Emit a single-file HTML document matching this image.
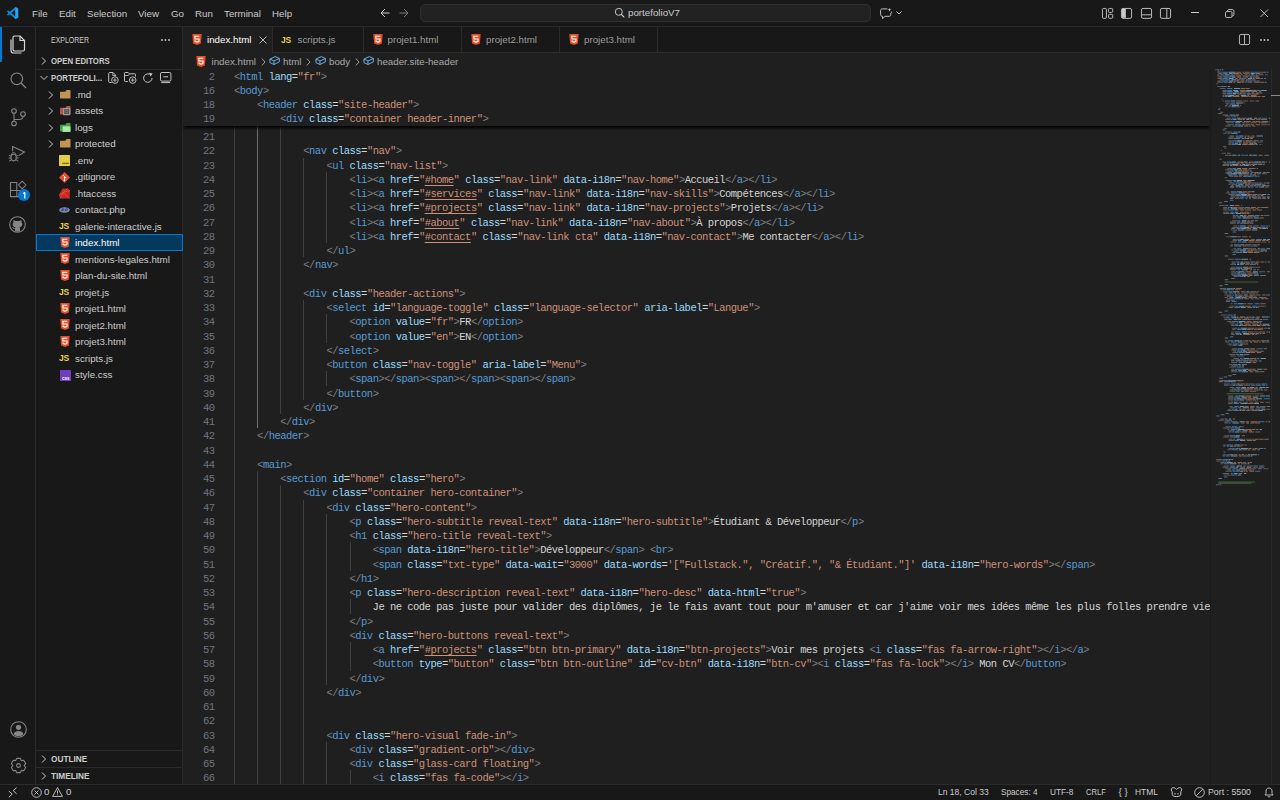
<!DOCTYPE html>
<html><head><meta charset="utf-8">
<style>
*{margin:0;padding:0;box-sizing:border-box}
html,body{width:1280px;height:800px;overflow:hidden;background:#181818}
body{position:relative;font-family:"Liberation Sans",sans-serif;color:#cccccc}
.abs{position:absolute}
svg{position:absolute;overflow:visible;z-index:6}
/* title bar */
#title{position:absolute;z-index:5;left:0;top:0;width:1280px;height:26.5px;background:#181818;border-bottom:1px solid #2b2b2b}
.menu{position:absolute;z-index:6;top:7px;font-size:9.75px;color:#cccccc;line-height:13px;white-space:nowrap}
#cc{position:absolute;z-index:6;left:419.5px;top:4px;width:451px;height:17.5px;background:#222222;border:1px solid #2f2f2f;border-radius:5px}
#cctext{position:absolute;z-index:7;left:628px;top:6px;font-size:9.75px;color:#cccccc;line-height:13px}
/* activity bar */
#act{position:absolute;left:0;top:26px;width:36px;height:758px;background:#181818;border-right:1px solid #2b2b2b}
#actind{position:absolute;left:0;top:26px;width:1.5px;height:36px;background:#0078d4}
/* sidebar */
#side{position:absolute;left:36px;top:26px;width:147px;height:758px;background:#181818;border-right:1px solid #2b2b2b}
.st{position:absolute;font-size:8.25px;line-height:11px;white-space:nowrap}
.row{position:absolute;left:36px;width:146px;height:16.5px}
.rt{position:absolute;left:75px;font-size:9.75px;line-height:13px;color:#cccccc;white-space:nowrap}
/* editor */
#tabs{position:absolute;left:183px;top:26px;width:1097px;height:26.5px;background:#181818;border-bottom:1px solid #2b2b2b}
.tab{position:absolute;top:26px;height:26.5px;background:#181818;border-right:1px solid #2b2b2b}
.tt{position:absolute;top:33px;font-size:9.75px;line-height:13px;color:#9d9d9d;white-space:nowrap}
#editor{position:absolute;left:183px;top:52px;width:1097px;height:732px;background:#1f1f1f}
.bc{position:absolute;top:55px;font-size:9.75px;line-height:13px;color:#a9a9a9;white-space:nowrap}
.ln{position:absolute;left:234px;height:14.25px;line-height:14.25px;font-family:"Liberation Mono",monospace;font-size:10.5px;letter-spacing:-0.525px;color:#d4d4d4;white-space:pre}
.num{position:absolute;left:189.5px;width:25px;text-align:right;height:14.25px;line-height:14.25px;font-family:"Liberation Mono",monospace;font-size:10.5px;letter-spacing:-0.525px;color:#6e7681;white-space:pre}
.ln i{font-style:normal}
.p{color:#808080}.t{color:#569cd6}.a{color:#9cdcfe}.s{color:#ce9178}
u{text-decoration:underline;text-decoration-color:#ce9178;text-underline-offset:1.5px}
.g{position:absolute;width:1px;background:#404040}
.g.act{background:#707070}
#sticky{position:absolute;left:183px;top:69px;width:1027px;height:57px;background:#1f1f1f;box-shadow:0 3px 3px -1px #000}
/* status */
#status{position:absolute;left:0;top:783.5px;width:1280px;height:16px;background:#181818;border-top:1px solid #2b2b2b}
.sb{position:absolute;top:785px;font-size:9.75px;line-height:13px;color:#cccccc;white-space:nowrap}
</style></head><body>

<div id="title"></div>
<!-- vscode logo -->
<svg style="left:7px;top:7px" width="12" height="12" viewBox="0 0 100 100"><path d="M72 8L9 63" stroke="#0a8fdc" stroke-width="15" stroke-linecap="round"/><path d="M72 92L9 37" stroke="#0a8fdc" stroke-width="15" stroke-linecap="round"/><path d="M68 1L94 12V88L68 99Z" fill="#22a7f0"/></svg>
<div class="menu" style="left:32px">File</div>
<div class="menu" style="left:59px">Edit</div>
<div class="menu" style="left:87px">Selection</div>
<div class="menu" style="left:138px">View</div>
<div class="menu" style="left:171px">Go</div>
<div class="menu" style="left:195px">Run</div>
<div class="menu" style="left:224px">Terminal</div>
<div class="menu" style="left:272px">Help</div>
<!-- nav arrows -->
<svg style="left:380px;top:8px" width="10" height="10" viewBox="0 0 10 10"><path d="M9.5 5H1M5 1L1 5L5 9" stroke="#cccccc" stroke-width="1" fill="none"/></svg>
<svg style="left:399px;top:8px" width="10" height="10" viewBox="0 0 10 10"><path d="M0.5 5H9M5 1L9 5L5 9" stroke="#7a7a7a" stroke-width="1" fill="none"/></svg>
<div id="cc"></div>
<svg style="left:614px;top:7px" width="11" height="11" viewBox="0 0 11 11"><circle cx="4.8" cy="4.85" r="3.5" stroke="#cccccc" stroke-width="0.95" fill="none"/><path d="M7.3 7.4L9.9 10" stroke="#cccccc" stroke-width="1.1" stroke-linecap="round"/></svg>
<div id="cctext">portefolioV7</div>
<svg style="left:1101.9px;top:7.7px" width="11.2" height="10.8" viewBox="0 0 11.2 10.8"><rect x="0.45" y="0.45" width="4" height="9.9" rx="1" stroke="#cccccc" stroke-width="0.9" fill="none"/><rect x="6.5" y="0.45" width="4.2" height="4" rx="1" stroke="#cccccc" stroke-width="0.9" fill="none"/><rect x="6.5" y="6.3" width="4.2" height="4" rx="1" stroke="#cccccc" stroke-width="0.9" fill="none"/></svg>
<svg style="left:1121.2px;top:7.7px" width="11" height="10.8" viewBox="0 0 11 10.8"><rect x="0.45" y="0.45" width="10.1" height="9.9" rx="1.5" stroke="#cccccc" stroke-width="0.9" fill="none"/><path d="M1 1H4.3V9.8H1Z" fill="#cccccc"/><path d="M4.3 0.8V10" stroke="#cccccc" stroke-width="0.9"/></svg>
<svg style="left:1141px;top:7.7px" width="11" height="10.8" viewBox="0 0 11 10.8"><rect x="0.45" y="0.45" width="10.1" height="9.9" rx="1.5" stroke="#cccccc" stroke-width="0.9" fill="none"/><path d="M0.8 6.8H10.2" stroke="#cccccc" stroke-width="0.9"/></svg>
<svg style="left:1160.2px;top:7.7px" width="11" height="10.8" viewBox="0 0 11 10.8"><rect x="0.45" y="0.45" width="10.1" height="9.9" rx="1.5" stroke="#cccccc" stroke-width="0.9" fill="none"/><path d="M6.8 0.8V10" stroke="#cccccc" stroke-width="0.9"/></svg>
<svg style="left:1190.5px;top:12px" width="9" height="1" viewBox="0 0 9 1"><rect x="0" y="0" width="8" height="1" fill="#cccccc"/></svg>
<svg style="left:1224.5px;top:8.5px" width="9.5" height="9" viewBox="0 0 9.5 9"><path d="M2.5 2.2V1.8C2.5 1 3 0.5 3.8 0.5H7.2C8.2 0.5 8.9 1.2 8.9 2.2V5.6C8.9 6.4 8.4 6.9 7.6 6.9H7.1" stroke="#cccccc" fill="none" stroke-width="0.9"/><rect x="0.5" y="2.5" width="6.5" height="6" rx="1.3" stroke="#cccccc" fill="none" stroke-width="0.9"/></svg>
<svg style="left:1259.5px;top:8.5px" width="8.5" height="8.5" viewBox="0 0 8.5 8.5"><path d="M0.5 0.5L8 8M8 0.5L0.5 8" stroke="#cccccc" stroke-width="0.9"/></svg>
<svg style="left:880px;top:7.5px" width="13" height="12" viewBox="0 0 13 12"><path d="M7.4 0.9H2.2C1.3 0.9 0.6 1.6 0.6 2.5V6.7C0.6 7.6 1.3 8.3 2.2 8.3H2.6V10.7L4.9 8.3H9.2C10.1 8.3 10.8 7.6 10.8 6.7V5" stroke="#cccccc" fill="none" stroke-width="0.95"/><path d="M9.5 -0.2L10 1.2L11.4 1.7L10 2.2L9.5 3.6L9 2.2L7.6 1.7L9 1.2Z" fill="#cccccc"/><path d="M11.6 3.1L11.9 3.9L12.6 4.2L11.9 4.5L11.6 5.3L11.3 4.5L10.6 4.2L11.3 3.9Z" fill="#cccccc"/></svg>
<svg style="left:895.8px;top:11.3px" width="6" height="3.5" viewBox="0 0 6 3.5"><path d="M0.4 0.4L3 3L5.6 0.4" stroke="#cccccc" fill="none" stroke-width="0.95"/></svg>

<div id="act"></div>
<div id="actind"></div>
<svg style="left:10px;top:35px" width="16" height="19" viewBox="0 0 16 19"><path d="M4.5 1H10L14.5 5.5V14.5C14.5 15.3 13.8 16 13 16H4.5C3.7 16 3 15.3 3 14.5V2.5C3 1.7 3.7 1 4.5 1Z" stroke="#d7d7d7" stroke-width="1.2" fill="none"/><path d="M10 1V5.5H14.5" stroke="#d7d7d7" stroke-width="1.2" fill="none"/><path d="M1 4.5V15.5C1 17 2 18 3.5 18H11.5" stroke="#d7d7d7" stroke-width="1.2" fill="none"/></svg>
<svg style="left:10px;top:72px" width="17" height="17" viewBox="0 0 17 17"><circle cx="6.8" cy="6.8" r="5.8" stroke="#868686" stroke-width="1.2" fill="none"/><path d="M10.8 10.8L16 16" stroke="#868686" stroke-width="1.3"/></svg>
<svg style="left:10.5px;top:107.5px" width="15" height="19" viewBox="0 0 15 19"><circle cx="3" cy="3" r="2.3" stroke="#868686" stroke-width="1.1" fill="none"/><circle cx="3" cy="15.5" r="2.3" stroke="#868686" stroke-width="1.1" fill="none"/><circle cx="12" cy="6" r="2.3" stroke="#868686" stroke-width="1.1" fill="none"/><path d="M3 5.3V13.2M12 8.3C12 10.5 10.5 11.5 8 11.5H3" stroke="#868686" stroke-width="1.1" fill="none"/></svg>
<svg style="left:8px;top:145px" width="18" height="18" viewBox="0 0 18 18"><path d="M4.6 6.3V1.4L16.4 7L10.8 10.6" stroke="#868686" stroke-width="1.1" fill="none" stroke-linejoin="round"/><ellipse cx="5.65" cy="12.6" rx="2.6" ry="3.3" stroke="#868686" stroke-width="1.1" fill="none"/><path d="M3.3 9.6C3.5 8.4 4.4 7.7 5.65 7.7C6.9 7.7 7.8 8.4 8 9.6M0.9 10.3L3 11.1M0.7 13H3M1 16.2L3.2 14.9M10.4 10.3L8.3 11.1M10.6 13H8.3M10.3 16.2L8.1 14.9" stroke="#868686" stroke-width="1" fill="none"/></svg>
<svg style="left:9px;top:180px" width="18" height="18" viewBox="0 0 18 18"><path d="M1.5 2.5H7.8V10.5H1.5Z M1.5 10.5H7.8V16.6H1.5Z M7.8 10.5H14V16.6H7.8Z" stroke="#868686" stroke-width="1.05" fill="none" stroke-linejoin="round"/><path d="M13.2 1.2L17 5L13.2 8.8L9.4 5Z" stroke="#868686" stroke-width="1.05" fill="none" stroke-linejoin="round"/></svg>
<div class="abs" style="left:18.25px;top:188.8px;width:12px;height:12px;border-radius:6px;background:#0078d4;z-index:7"></div>
<svg style="left:22px;top:191.5px;z-index:8" width="5" height="7" viewBox="0 0 5 7"><path d="M1 1.6L2.8 0.6V6.4" stroke="#ffffff" stroke-width="1.2" fill="none" stroke-linejoin="round"/></svg>
<svg style="left:9px;top:216px" width="17" height="17" viewBox="0 0 17 17"><circle cx="8.5" cy="8.5" r="7.8" stroke="#868686" stroke-width="1.1" fill="none"/><path d="M6 15.5V13C5 13.2 4.2 12.8 3.8 12C3.5 11.4 3.2 11.2 3 11.1C4 11 4.4 11.7 4.8 12.1C5.2 12.4 5.8 12.4 6.1 12.2C6.2 11.8 6.4 11.5 6.6 11.3C4.6 11.1 3.7 10.1 3.7 8.3C3.7 7.5 4 6.8 4.5 6.3C4.3 5.7 4.3 4.9 4.6 4.3C5.3 4.3 6 4.7 6.5 5.1C7.8 4.8 9.2 4.8 10.5 5.1C11 4.7 11.7 4.3 12.4 4.3C12.7 4.9 12.7 5.7 12.5 6.3C13 6.8 13.3 7.5 13.3 8.3C13.3 10.1 12.4 11.1 10.4 11.3C10.8 11.7 11 12.2 11 12.8V15.5Z" fill="#868686"/></svg>
<svg style="left:9.5px;top:720.5px" width="17" height="17" viewBox="0 0 17 17"><circle cx="8.5" cy="8.5" r="7.8" stroke="#868686" stroke-width="1.1" fill="none"/><circle cx="8.5" cy="6.3" r="2.6" fill="#868686"/><path d="M3.6 13.2C4.2 11 6 10 8.5 10C11 10 12.8 11 13.4 13.2C12.3 14.5 10.5 15.2 8.5 15.2C6.5 15.2 4.7 14.5 3.6 13.2Z" fill="#868686"/></svg>
<svg style="left:9.5px;top:757.1px" width="17" height="17" viewBox="0 0 17 17"><path d="M5.72 3.64 L6.60 1.35 L10.40 1.35 L11.28 3.64 L11.32 3.66 L13.74 3.28 L15.64 6.57 L14.10 8.48 L14.10 8.52 L15.64 10.43 L13.74 13.72 L11.32 13.34 L11.28 13.36 L10.40 15.65 L6.60 15.65 L5.72 13.36 L5.68 13.34 L3.26 13.72 L1.36 10.43 L2.90 8.52 L2.90 8.48 L1.36 6.57 L3.26 3.28 L5.68 3.66Z" stroke="#868686" stroke-width="1.1" fill="none" stroke-linejoin="round"/><circle cx="8.5" cy="8.5" r="1.9" stroke="#868686" stroke-width="1.1" fill="none"/></svg>

<div id="side"></div>
<div class="st" style="left:51px;top:35px;color:#cccccc;transform:scaleX(0.845);transform-origin:0 0">EXPLORER</div>
<svg style="left:161px;top:39px" width="9" height="2" viewBox="0 0 9 2"><circle cx="1" cy="1" r="0.9" fill="#cccccc"/><circle cx="4.5" cy="1" r="0.9" fill="#cccccc"/><circle cx="8" cy="1" r="0.9" fill="#cccccc"/></svg>
<svg style="left:41px;top:57px" width="6" height="8" viewBox="0 0 6 8"><path d="M1 0.5L4.5 4L1 7.5" stroke="#cccccc" stroke-width="1" fill="none"/></svg>
<div class="st" style="left:51px;top:56px;font-weight:bold;color:#cccccc;transform:scaleX(0.944);transform-origin:0 0">OPEN EDITORS</div>
<div class="abs" style="left:36px;top:69px;width:146px;height:1px;background:#2b2b2b"></div>
<svg style="left:40px;top:75px" width="8" height="6" viewBox="0 0 8 6"><path d="M0.5 1L4 4.5L7.5 1" stroke="#cccccc" stroke-width="1" fill="none"/></svg>
<div class="st" style="left:51px;top:73px;font-weight:bold;color:#cccccc;transform:scaleX(0.944);transform-origin:0 0">PORTEFOLI...</div>
<svg style="left:107.5px;top:72px" width="12" height="12" viewBox="0 0 12 12"><path d="M3.6 10.5H1.7C1.1 10.5 0.7 10.1 0.7 9.5V1.5C0.7 0.9 1.1 0.5 1.7 0.5H5L7.6 3.1V4.3" stroke="#cccccc" stroke-width="0.95" fill="none"/><path d="M4.8 0.6V3.5H7.6" stroke="#cccccc" stroke-width="0.8" fill="none"/><circle cx="6.9" cy="8.1" r="3.3" stroke="#cccccc" stroke-width="0.9" fill="#181818"/><path d="M6.9 6.2V10M5 8.1H8.8" stroke="#cccccc" stroke-width="0.8"/></svg>
<svg style="left:124px;top:72px" width="13" height="12" viewBox="0 0 13 12"><path d="M3.8 9.5H1.2C0.8 9.5 0.5 9.2 0.5 8.8V1.2C0.5 0.8 0.8 0.5 1.2 0.5H4.2L5.4 1.8H10.8C11.2 1.8 11.5 2.1 11.5 2.5V4.5" stroke="#cccccc" stroke-width="0.95" fill="none"/><path d="M0.5 3.5H4.4L5.4 1.8" stroke="#cccccc" stroke-width="0.8" fill="none"/><circle cx="8.7" cy="8.1" r="3.3" stroke="#cccccc" stroke-width="0.9" fill="#181818"/><path d="M8.7 6.2V10M6.8 8.1H10.6" stroke="#cccccc" stroke-width="0.8"/></svg>
<svg style="left:142.8px;top:72.6px" width="10.5" height="10" viewBox="0 0 10.5 10"><path d="M9 5A4.2 4.2 0 1 1 6.4 1.2" stroke="#cccccc" stroke-width="0.95" fill="none"/><path d="M5.9 -0.2L9.6 0.5L7.6 3.6Z" fill="#cccccc"/></svg>
<svg style="left:160.2px;top:72px" width="11.5" height="11.5" viewBox="0 0 11.5 11.5"><rect x="0.5" y="0.5" width="10.4" height="8.6" rx="1.3" stroke="#cccccc" stroke-width="0.95" fill="none"/><path d="M3.3 4.8H8.1" stroke="#cccccc" stroke-width="1"/><path d="M1.2 10.6H10.2" stroke="#cccccc" stroke-width="0.95"/></svg>
<svg style="left:48px;top:90.5px" width="6" height="8" viewBox="0 0 6 8"><path d="M1 0.5L4.5 4L1 7.5" stroke="#cccccc" stroke-width="1" fill="none"/></svg>
<svg style="left:59.7px;top:89.8px" width="11" height="9" viewBox="0 0 11 9"><path d="M0 2.3C0 2 0.2 1.8 0.5 1.8H5.2L6.4 0.4C6.5 0.2 6.7 0.1 6.9 0.1H10C10.3 0.1 10.5 0.3 10.5 0.6V8C10.5 8.3 10.3 8.5 10 8.5H0.5C0.2 8.5 0 8.3 0 8Z" fill="#c09553"/></svg>
<div class="rt" style="top:87.50px">.md</div>
<svg style="left:48px;top:107.0px" width="6" height="8" viewBox="0 0 6 8"><path d="M1 0.5L4.5 4L1 7.5" stroke="#cccccc" stroke-width="1" fill="none"/></svg>
<svg style="left:59.7px;top:106.3px" width="11" height="9.5" viewBox="0 0 11 9.5"><path d="M0 2.3C0 2 0.2 1.8 0.5 1.8H5.2L6.4 0.4C6.5 0.2 6.7 0.1 6.9 0.1H10C10.3 0.1 10.5 0.3 10.5 0.6V8C10.5 8.3 10.3 8.5 10 8.5H0.5C0.2 8.5 0 8.3 0 8Z" fill="#c0504d"/><rect x="3" y="2" width="7.3" height="7.2" rx="0.8" fill="#9a9a9a"/><rect x="4.2" y="3.2" width="4.9" height="4.8" fill="#4a4a4a"/><circle cx="6.65" cy="5.6" r="1.5" stroke="#9a9a9a" stroke-width="0.6" fill="none"/></svg>
<div class="rt" style="top:104.00px">assets</div>
<svg style="left:48px;top:123.5px" width="6" height="8" viewBox="0 0 6 8"><path d="M1 0.5L4.5 4L1 7.5" stroke="#cccccc" stroke-width="1" fill="none"/></svg>
<svg style="left:59.7px;top:122.8px" width="11" height="9.5" viewBox="0 0 11 9.5"><path d="M0 2.3C0 2 0.2 1.8 0.5 1.8H5.2L6.4 0.4C6.5 0.2 6.7 0.1 6.9 0.1H10C10.3 0.1 10.5 0.3 10.5 0.6V8C10.5 8.3 10.3 8.5 10 8.5H0.5C0.2 8.5 0 8.3 0 8Z" fill="#43a047"/><rect x="2.5" y="3.3" width="8" height="5.8" rx="0.6" fill="#9be29b"/><path d="M3.5 5H9.5M3.5 6.8H9.5" stroke="#d6f5d6" stroke-width="0.6"/></svg>
<div class="rt" style="top:120.50px">logs</div>
<svg style="left:48px;top:140.0px" width="6" height="8" viewBox="0 0 6 8"><path d="M1 0.5L4.5 4L1 7.5" stroke="#cccccc" stroke-width="1" fill="none"/></svg>
<svg style="left:59.7px;top:139.3px" width="11" height="9" viewBox="0 0 11 9"><path d="M0 2.3C0 2 0.2 1.8 0.5 1.8H5.2L6.4 0.4C6.5 0.2 6.7 0.1 6.9 0.1H10C10.3 0.1 10.5 0.3 10.5 0.6V8C10.5 8.3 10.3 8.5 10 8.5H0.5C0.2 8.5 0 8.3 0 8Z" fill="#c09553"/></svg>
<div class="rt" style="top:137.00px">protected</div>
<svg style="left:59px;top:154.7px" width="11" height="11" viewBox="0 0 11 11"><rect x="0" y="0" width="11" height="11" rx="0.5" fill="#e0cc48"/><path d="M3.2 8.3H9.8" stroke="#5a5020" stroke-width="1"/></svg>
<div class="rt" style="top:153.50px">.env</div>
<svg style="left:59px;top:171.8px" width="11" height="11" viewBox="0 0 11 11"><path d="M5.5 0L11 5.5L5.5 11L0 5.5Z" fill="#e44e33"/><path d="M4.2 3.2L6.8 5.8M5.5 4.5V8.6" stroke="#fff" stroke-width="0.9"/><circle cx="5.5" cy="8.4" r="0.8" fill="#fff"/></svg>
<div class="rt" style="top:170.00px">.gitignore</div>
<svg style="left:59px;top:188.0px" width="11" height="11" viewBox="0 0 11 11"><path d="M3.5 0.4H8.8L11 2.6L10.6 10.6L1.2 10.6L0 7Z" fill="#c42a20"/><path d="M1.2 10.6L4 4.5L10.6 10.6M4 4.5L8.8 0.4M0 7L4 4.5L11 2.6" stroke="#e86a60" stroke-width="0.5" fill="none"/></svg>
<div class="rt" style="top:186.50px">.htaccess</div>
<svg style="left:59px;top:207.0px" width="11" height="6" viewBox="0 0 11 6"><ellipse cx="5.5" cy="3" rx="5.3" ry="2.8" fill="#7d8ac0"/><path d="M2.6 4.3L3.2 1.8H4.4C5 1.8 5.1 2.3 4.9 2.8C4.7 3.3 4.3 3.4 3.8 3.4H3M6.2 4.3L6.8 1.8H8C8.6 1.8 8.7 2.3 8.5 2.8C8.3 3.3 7.9 3.4 7.4 3.4H6.6" stroke="#2a2f4a" stroke-width="0.7" fill="none"/></svg>
<div class="rt" style="top:203.00px">contact.php</div>
<div class="abs" style="left:59px;top:220.0px;font-size:8.5px;font-weight:bold;color:#e8d44d;line-height:12px;letter-spacing:-0.3px">JS</div>
<div class="rt" style="top:219.50px">galerie-interactive.js</div>
<div class="abs" style="left:36px;top:234.25px;width:147px;height:16.5px;background:#04395e;border:1px solid #0078d4"></div>
<svg style="left:60px;top:236.8px" width="10" height="11" viewBox="0 0 10 11"><path d="M0.3 0H9.7L8.9 9.5L5 11L1.1 9.5Z" fill="#e44d26"/><path d="M7.3 2.3H2.8L3 5H7.1L6.9 7.5L5 8.1L3.1 7.5L3 6.3" stroke="#fff" stroke-width="1.1" fill="none"/></svg>
<div class="rt" style="top:236.00px;color:#ffffff">index.html</div>
<svg style="left:60px;top:253.3px" width="10" height="11" viewBox="0 0 10 11"><path d="M0.3 0H9.7L8.9 9.5L5 11L1.1 9.5Z" fill="#e44d26"/><path d="M7.3 2.3H2.8L3 5H7.1L6.9 7.5L5 8.1L3.1 7.5L3 6.3" stroke="#fff" stroke-width="1.1" fill="none"/></svg>
<div class="rt" style="top:252.50px">mentions-legales.html</div>
<svg style="left:60px;top:269.8px" width="10" height="11" viewBox="0 0 10 11"><path d="M0.3 0H9.7L8.9 9.5L5 11L1.1 9.5Z" fill="#e44d26"/><path d="M7.3 2.3H2.8L3 5H7.1L6.9 7.5L5 8.1L3.1 7.5L3 6.3" stroke="#fff" stroke-width="1.1" fill="none"/></svg>
<div class="rt" style="top:269.00px">plan-du-site.html</div>
<div class="abs" style="left:59px;top:286.0px;font-size:8.5px;font-weight:bold;color:#e8d44d;line-height:12px;letter-spacing:-0.3px">JS</div>
<div class="rt" style="top:285.50px">projet.js</div>
<svg style="left:60px;top:302.8px" width="10" height="11" viewBox="0 0 10 11"><path d="M0.3 0H9.7L8.9 9.5L5 11L1.1 9.5Z" fill="#e44d26"/><path d="M7.3 2.3H2.8L3 5H7.1L6.9 7.5L5 8.1L3.1 7.5L3 6.3" stroke="#fff" stroke-width="1.1" fill="none"/></svg>
<div class="rt" style="top:302.00px">projet1.html</div>
<svg style="left:60px;top:319.3px" width="10" height="11" viewBox="0 0 10 11"><path d="M0.3 0H9.7L8.9 9.5L5 11L1.1 9.5Z" fill="#e44d26"/><path d="M7.3 2.3H2.8L3 5H7.1L6.9 7.5L5 8.1L3.1 7.5L3 6.3" stroke="#fff" stroke-width="1.1" fill="none"/></svg>
<div class="rt" style="top:318.50px">projet2.html</div>
<svg style="left:60px;top:335.8px" width="10" height="11" viewBox="0 0 10 11"><path d="M0.3 0H9.7L8.9 9.5L5 11L1.1 9.5Z" fill="#e44d26"/><path d="M7.3 2.3H2.8L3 5H7.1L6.9 7.5L5 8.1L3.1 7.5L3 6.3" stroke="#fff" stroke-width="1.1" fill="none"/></svg>
<div class="rt" style="top:335.00px">projet3.html</div>
<div class="abs" style="left:59px;top:352.0px;font-size:8.5px;font-weight:bold;color:#e8d44d;line-height:12px;letter-spacing:-0.3px">JS</div>
<div class="rt" style="top:351.50px">scripts.js</div>
<svg style="left:59.5px;top:369.5px" width="11" height="11" viewBox="0 0 11 11"><rect x="0" y="0" width="11" height="11" rx="0.6" fill="#6d3fc0"/><text x="5.8" y="9.5" font-size="4.6" font-family="Liberation Sans" font-weight="bold" fill="#fff" text-anchor="middle">css</text></svg>
<div class="rt" style="top:368.00px">style.css</div>
<div class="abs" style="left:36px;top:750px;width:146px;height:1px;background:#2b2b2b"></div>
<svg style="left:41px;top:755px" width="6" height="8" viewBox="0 0 6 8"><path d="M1 0.5L4.5 4L1 7.5" stroke="#cccccc" stroke-width="1" fill="none"/></svg>
<div class="st" style="left:51px;top:754px;font-weight:bold;color:#cccccc">OUTLINE</div>
<div class="abs" style="left:36px;top:767px;width:146px;height:1px;background:#2b2b2b"></div>
<svg style="left:41px;top:772px" width="6" height="8" viewBox="0 0 6 8"><path d="M1 0.5L4.5 4L1 7.5" stroke="#cccccc" stroke-width="1" fill="none"/></svg>
<div class="st" style="left:51px;top:771px;font-weight:bold;color:#cccccc">TIMELINE</div>

<div id="editor"></div>
<div id="tabs"></div>
<div class="abs" style="left:183px;top:26px;width:90px;height:27px;background:#1f1f1f;border-top:1px solid #0078d4;border-right:1px solid #2b2b2b"></div>
<svg style="left:192px;top:33.8px" width="10" height="11" viewBox="0 0 10 11"><path d="M0.3 0H9.7L8.9 9.5L5 11L1.1 9.5Z" fill="#e44d26"/><path d="M7.3 2.3H2.8L3 5H7.1L6.9 7.5L5 8.1L3.1 7.5L3 6.3" stroke="#fff" stroke-width="1.1" fill="none"/></svg>
<div class="tt" style="left:207px;color:#ffffff">index.html</div>
<svg style="left:259px;top:36px" width="8" height="8" viewBox="0 0 8 8"><path d="M0.5 0.5L7.5 7.5M7.5 0.5L0.5 7.5" stroke="#cccccc" stroke-width="0.9"/></svg>
<div class="abs" style="left:273px;top:26px;width:90.5px;height:26.5px;border-right:1px solid #2b2b2b;border-bottom:1px solid #2b2b2b;background:#181818"></div>
<div class="abs" style="left:281px;top:33.5px;font-size:8.5px;font-weight:bold;color:#e8d44d;line-height:12px;letter-spacing:-0.3px">JS</div>
<div class="tt" style="left:297.5px">scripts.js</div>
<div class="abs" style="left:363px;top:26px;width:98.5px;height:26.5px;border-right:1px solid #2b2b2b;border-bottom:1px solid #2b2b2b;background:#181818"></div>
<svg style="left:372.5px;top:33.8px" width="10" height="11" viewBox="0 0 10 11"><path d="M0.3 0H9.7L8.9 9.5L5 11L1.1 9.5Z" fill="#e44d26"/><path d="M7.3 2.3H2.8L3 5H7.1L6.9 7.5L5 8.1L3.1 7.5L3 6.3" stroke="#fff" stroke-width="1.1" fill="none"/></svg>
<div class="tt" style="left:387.5px">projet1.html</div>
<div class="abs" style="left:461px;top:26px;width:98.5px;height:26.5px;border-right:1px solid #2b2b2b;border-bottom:1px solid #2b2b2b;background:#181818"></div>
<svg style="left:470.5px;top:33.8px" width="10" height="11" viewBox="0 0 10 11"><path d="M0.3 0H9.7L8.9 9.5L5 11L1.1 9.5Z" fill="#e44d26"/><path d="M7.3 2.3H2.8L3 5H7.1L6.9 7.5L5 8.1L3.1 7.5L3 6.3" stroke="#fff" stroke-width="1.1" fill="none"/></svg>
<div class="tt" style="left:486px">projet2.html</div>
<div class="abs" style="left:559px;top:26px;width:98.5px;height:26.5px;border-right:1px solid #2b2b2b;border-bottom:1px solid #2b2b2b;background:#181818"></div>
<svg style="left:568.5px;top:33.8px" width="10" height="11" viewBox="0 0 10 11"><path d="M0.3 0H9.7L8.9 9.5L5 11L1.1 9.5Z" fill="#e44d26"/><path d="M7.3 2.3H2.8L3 5H7.1L6.9 7.5L5 8.1L3.1 7.5L3 6.3" stroke="#fff" stroke-width="1.1" fill="none"/></svg>
<div class="tt" style="left:584px">projet3.html</div>
<div class="abs" style="left:362.5px;top:26.5px;width:1px;height:26px;background:#2b2b2b"></div>
<div class="abs" style="left:460.5px;top:26.5px;width:1px;height:26px;background:#2b2b2b"></div>
<div class="abs" style="left:558.5px;top:26.5px;width:1px;height:26px;background:#2b2b2b"></div>
<div class="abs" style="left:656.5px;top:26.5px;width:1px;height:26px;background:#2b2b2b"></div>
<svg style="left:1238.6px;top:33.9px" width="11" height="11" viewBox="0 0 11 11"><rect x="0.45" y="0.45" width="10.1" height="10.1" rx="1.5" stroke="#cccccc" stroke-width="0.9" fill="none"/><path d="M5.5 0.8V10.2" stroke="#cccccc" stroke-width="0.9"/></svg>
<svg style="left:1259.5px;top:38.6px" width="9" height="2" viewBox="0 0 9 2"><circle cx="1" cy="1" r="0.9" fill="#cccccc"/><circle cx="4.5" cy="1" r="0.9" fill="#cccccc"/><circle cx="8" cy="1" r="0.9" fill="#cccccc"/></svg>
<svg style="left:196px;top:55.8px" width="10" height="11" viewBox="0 0 10 11"><path d="M0.3 0H9.7L8.9 9.5L5 11L1.1 9.5Z" fill="#e44d26"/><path d="M7.3 2.3H2.8L3 5H7.1L6.9 7.5L5 8.1L3.1 7.5L3 6.3" stroke="#fff" stroke-width="1.1" fill="none"/></svg>
<div class="bc" style="left:211.5px">index.html</div>
<svg style="left:260.5px;top:57.5px" width="5" height="8" viewBox="0 0 5 8"><path d="M0.8 0.5L4 4L0.8 7.5" stroke="#a9a9a9" stroke-width="0.9" fill="none"/></svg>
<svg style="left:268.8px;top:56.1px" width="11.3" height="8.8" viewBox="0 1.5 16 12.5"><path d="M1.3 5.9L8.9 2.3L14.6 5V9.9L7 13.6L1.3 10.9Z M1.3 5.9L7 8.5L14.6 5 M7 8.5V13.6" stroke="#75beff" stroke-width="1.25" fill="none" stroke-linejoin="round"/></svg>
<div class="bc" style="left:283px">html</div>
<svg style="left:306px;top:57.5px" width="5" height="8" viewBox="0 0 5 8"><path d="M0.8 0.5L4 4L0.8 7.5" stroke="#a9a9a9" stroke-width="0.9" fill="none"/></svg>
<svg style="left:314.8px;top:56.1px" width="11.3" height="8.8" viewBox="0 1.5 16 12.5"><path d="M1.3 5.9L8.9 2.3L14.6 5V9.9L7 13.6L1.3 10.9Z M1.3 5.9L7 8.5L14.6 5 M7 8.5V13.6" stroke="#75beff" stroke-width="1.25" fill="none" stroke-linejoin="round"/></svg>
<div class="bc" style="left:329px">body</div>
<svg style="left:355px;top:57.5px" width="5" height="8" viewBox="0 0 5 8"><path d="M0.8 0.5L4 4L0.8 7.5" stroke="#a9a9a9" stroke-width="0.9" fill="none"/></svg>
<svg style="left:363.3px;top:56.1px" width="11.3" height="8.8" viewBox="0 1.5 16 12.5"><path d="M1.3 5.9L8.9 2.3L14.6 5V9.9L7 13.6L1.3 10.9Z M1.3 5.9L7 8.5L14.6 5 M7 8.5V13.6" stroke="#75beff" stroke-width="1.25" fill="none" stroke-linejoin="round"/></svg>
<div class="bc" style="left:377px">header.site-header</div>
<div class="g" style="left:234.0px;top:126.00px;height:658.50px"></div>
<div class="g act" style="left:257.1px;top:126.00px;height:302.25px"></div>
<div class="g" style="left:257.1px;top:471.00px;height:313.50px"></div>
<div class="g" style="left:280.2px;top:126.00px;height:288.00px"></div>
<div class="g" style="left:280.2px;top:485.25px;height:299.25px"></div>
<div class="g" style="left:303.3px;top:157.50px;height:99.75px"></div>
<div class="g" style="left:303.3px;top:300.00px;height:99.75px"></div>
<div class="g" style="left:303.3px;top:499.50px;height:285.00px"></div>
<div class="g" style="left:326.4px;top:171.75px;height:71.25px"></div>
<div class="g" style="left:326.4px;top:314.25px;height:28.50px"></div>
<div class="g" style="left:326.4px;top:371.25px;height:14.25px"></div>
<div class="g" style="left:326.4px;top:513.75px;height:171.00px"></div>
<div class="g" style="left:326.4px;top:741.75px;height:42.75px"></div>
<div class="g" style="left:349.5px;top:542.25px;height:28.50px"></div>
<div class="g" style="left:349.5px;top:599.25px;height:14.25px"></div>
<div class="g" style="left:349.5px;top:642.00px;height:28.50px"></div>
<div class="g" style="left:349.5px;top:770.25px;height:14.25px"></div>
<div class="num" style="top:130.00px">21</div>
<div class="num" style="top:144.25px">22</div>
<div class="num" style="top:158.50px">23</div>
<div class="num" style="top:172.75px">24</div>
<div class="num" style="top:187.00px">25</div>
<div class="num" style="top:201.25px">26</div>
<div class="num" style="top:215.50px">27</div>
<div class="num" style="top:229.75px">28</div>
<div class="num" style="top:244.00px">29</div>
<div class="num" style="top:258.25px">30</div>
<div class="num" style="top:272.50px">31</div>
<div class="num" style="top:286.75px">32</div>
<div class="num" style="top:301.00px">33</div>
<div class="num" style="top:315.25px">34</div>
<div class="num" style="top:329.50px">35</div>
<div class="num" style="top:343.75px">36</div>
<div class="num" style="top:358.00px">37</div>
<div class="num" style="top:372.25px">38</div>
<div class="num" style="top:386.50px">39</div>
<div class="num" style="top:400.75px">40</div>
<div class="num" style="top:415.00px">41</div>
<div class="num" style="top:429.25px">42</div>
<div class="num" style="top:443.50px">43</div>
<div class="num" style="top:457.75px">44</div>
<div class="num" style="top:472.00px">45</div>
<div class="num" style="top:486.25px">46</div>
<div class="num" style="top:500.50px">47</div>
<div class="num" style="top:514.75px">48</div>
<div class="num" style="top:529.00px">49</div>
<div class="num" style="top:543.25px">50</div>
<div class="num" style="top:557.50px">51</div>
<div class="num" style="top:571.75px">52</div>
<div class="num" style="top:586.00px">53</div>
<div class="num" style="top:600.25px">54</div>
<div class="num" style="top:614.50px">55</div>
<div class="num" style="top:628.75px">56</div>
<div class="num" style="top:643.00px">57</div>
<div class="num" style="top:657.25px">58</div>
<div class="num" style="top:671.50px">59</div>
<div class="num" style="top:685.75px">60</div>
<div class="num" style="top:700.00px">61</div>
<div class="num" style="top:714.25px">62</div>
<div class="num" style="top:728.50px">63</div>
<div class="num" style="top:742.75px">64</div>
<div class="num" style="top:757.00px">65</div>
<div class="num" style="top:771.25px">66</div>
<div class="ln" style="top:130.00px"></div>
<div class="ln" style="top:144.25px">            <i class="p">&lt;</i><i class="t">nav</i> <i class="a">class</i>=<i class="s">"nav"</i><i class="p">&gt;</i></div>
<div class="ln" style="top:158.50px">                <i class="p">&lt;</i><i class="t">ul</i> <i class="a">class</i>=<i class="s">"nav-list"</i><i class="p">&gt;</i></div>
<div class="ln" style="top:172.75px">                    <i class="p">&lt;</i><i class="t">li</i><i class="p">&gt;</i><i class="p">&lt;</i><i class="t">a</i> <i class="a">href</i>=<i class="s">"<u>#home</u>"</i> <i class="a">class</i>=<i class="s">"nav-link"</i> <i class="a">data-i18n</i>=<i class="s">"nav-home"</i><i class="p">&gt;</i>Accueil<i class="p">&lt;/</i><i class="t">a</i><i class="p">&gt;</i><i class="p">&lt;/</i><i class="t">li</i><i class="p">&gt;</i></div>
<div class="ln" style="top:187.00px">                    <i class="p">&lt;</i><i class="t">li</i><i class="p">&gt;</i><i class="p">&lt;</i><i class="t">a</i> <i class="a">href</i>=<i class="s">"<u>#services</u>"</i> <i class="a">class</i>=<i class="s">"nav-link"</i> <i class="a">data-i18n</i>=<i class="s">"nav-skills"</i><i class="p">&gt;</i>Compétences<i class="p">&lt;/</i><i class="t">a</i><i class="p">&gt;</i><i class="p">&lt;/</i><i class="t">li</i><i class="p">&gt;</i></div>
<div class="ln" style="top:201.25px">                    <i class="p">&lt;</i><i class="t">li</i><i class="p">&gt;</i><i class="p">&lt;</i><i class="t">a</i> <i class="a">href</i>=<i class="s">"<u>#projects</u>"</i> <i class="a">class</i>=<i class="s">"nav-link"</i> <i class="a">data-i18n</i>=<i class="s">"nav-projects"</i><i class="p">&gt;</i>Projets<i class="p">&lt;/</i><i class="t">a</i><i class="p">&gt;</i><i class="p">&lt;/</i><i class="t">li</i><i class="p">&gt;</i></div>
<div class="ln" style="top:215.50px">                    <i class="p">&lt;</i><i class="t">li</i><i class="p">&gt;</i><i class="p">&lt;</i><i class="t">a</i> <i class="a">href</i>=<i class="s">"<u>#about</u>"</i> <i class="a">class</i>=<i class="s">"nav-link"</i> <i class="a">data-i18n</i>=<i class="s">"nav-about"</i><i class="p">&gt;</i>À propos<i class="p">&lt;/</i><i class="t">a</i><i class="p">&gt;</i><i class="p">&lt;/</i><i class="t">li</i><i class="p">&gt;</i></div>
<div class="ln" style="top:229.75px">                    <i class="p">&lt;</i><i class="t">li</i><i class="p">&gt;</i><i class="p">&lt;</i><i class="t">a</i> <i class="a">href</i>=<i class="s">"<u>#contact</u>"</i> <i class="a">class</i>=<i class="s">"nav-link cta"</i> <i class="a">data-i18n</i>=<i class="s">"nav-contact"</i><i class="p">&gt;</i>Me contacter<i class="p">&lt;/</i><i class="t">a</i><i class="p">&gt;</i><i class="p">&lt;/</i><i class="t">li</i><i class="p">&gt;</i></div>
<div class="ln" style="top:244.00px">                <i class="p">&lt;/</i><i class="t">ul</i><i class="p">&gt;</i></div>
<div class="ln" style="top:258.25px">            <i class="p">&lt;/</i><i class="t">nav</i><i class="p">&gt;</i></div>
<div class="ln" style="top:272.50px"></div>
<div class="ln" style="top:286.75px">            <i class="p">&lt;</i><i class="t">div</i> <i class="a">class</i>=<i class="s">"header-actions"</i><i class="p">&gt;</i></div>
<div class="ln" style="top:301.00px">                <i class="p">&lt;</i><i class="t">select</i> <i class="a">id</i>=<i class="s">"language-toggle"</i> <i class="a">class</i>=<i class="s">"language-selector"</i> <i class="a">aria-label</i>=<i class="s">"Langue"</i><i class="p">&gt;</i></div>
<div class="ln" style="top:315.25px">                    <i class="p">&lt;</i><i class="t">option</i> <i class="a">value</i>=<i class="s">"fr"</i><i class="p">&gt;</i>FR<i class="p">&lt;/</i><i class="t">option</i><i class="p">&gt;</i></div>
<div class="ln" style="top:329.50px">                    <i class="p">&lt;</i><i class="t">option</i> <i class="a">value</i>=<i class="s">"en"</i><i class="p">&gt;</i>EN<i class="p">&lt;/</i><i class="t">option</i><i class="p">&gt;</i></div>
<div class="ln" style="top:343.75px">                <i class="p">&lt;/</i><i class="t">select</i><i class="p">&gt;</i></div>
<div class="ln" style="top:358.00px">                <i class="p">&lt;</i><i class="t">button</i> <i class="a">class</i>=<i class="s">"nav-toggle"</i> <i class="a">aria-label</i>=<i class="s">"Menu"</i><i class="p">&gt;</i></div>
<div class="ln" style="top:372.25px">                    <i class="p">&lt;</i><i class="t">span</i><i class="p">&gt;</i><i class="p">&lt;/</i><i class="t">span</i><i class="p">&gt;</i><i class="p">&lt;</i><i class="t">span</i><i class="p">&gt;</i><i class="p">&lt;/</i><i class="t">span</i><i class="p">&gt;</i><i class="p">&lt;</i><i class="t">span</i><i class="p">&gt;</i><i class="p">&lt;/</i><i class="t">span</i><i class="p">&gt;</i></div>
<div class="ln" style="top:386.50px">                <i class="p">&lt;/</i><i class="t">button</i><i class="p">&gt;</i></div>
<div class="ln" style="top:400.75px">            <i class="p">&lt;/</i><i class="t">div</i><i class="p">&gt;</i></div>
<div class="ln" style="top:415.00px">        <i class="p">&lt;/</i><i class="t">div</i><i class="p">&gt;</i></div>
<div class="ln" style="top:429.25px">    <i class="p">&lt;/</i><i class="t">header</i><i class="p">&gt;</i></div>
<div class="ln" style="top:443.50px"></div>
<div class="ln" style="top:457.75px">    <i class="p">&lt;</i><i class="t">main</i><i class="p">&gt;</i></div>
<div class="ln" style="top:472.00px">        <i class="p">&lt;</i><i class="t">section</i> <i class="a">id</i>=<i class="s">"home"</i> <i class="a">class</i>=<i class="s">"hero"</i><i class="p">&gt;</i></div>
<div class="ln" style="top:486.25px">            <i class="p">&lt;</i><i class="t">div</i> <i class="a">class</i>=<i class="s">"container hero-container"</i><i class="p">&gt;</i></div>
<div class="ln" style="top:500.50px">                <i class="p">&lt;</i><i class="t">div</i> <i class="a">class</i>=<i class="s">"hero-content"</i><i class="p">&gt;</i></div>
<div class="ln" style="top:514.75px">                    <i class="p">&lt;</i><i class="t">p</i> <i class="a">class</i>=<i class="s">"hero-subtitle reveal-text"</i> <i class="a">data-i18n</i>=<i class="s">"hero-subtitle"</i><i class="p">&gt;</i>Étudiant &amp; Développeur<i class="p">&lt;/</i><i class="t">p</i><i class="p">&gt;</i></div>
<div class="ln" style="top:529.00px">                    <i class="p">&lt;</i><i class="t">h1</i> <i class="a">class</i>=<i class="s">"hero-title reveal-text"</i><i class="p">&gt;</i></div>
<div class="ln" style="top:543.25px">                        <i class="p">&lt;</i><i class="t">span</i> <i class="a">data-i18n</i>=<i class="s">"hero-title"</i><i class="p">&gt;</i>Développeur<i class="p">&lt;/</i><i class="t">span</i><i class="p">&gt;</i> <i class="p">&lt;</i><i class="t">br</i><i class="p">&gt;</i></div>
<div class="ln" style="top:557.50px">                        <i class="p">&lt;</i><i class="t">span</i> <i class="a">class</i>=<i class="s">"txt-type"</i> <i class="a">data-wait</i>=<i class="s">"3000"</i> <i class="a">data-words</i>=<i class="s">'["Fullstack.", "Créatif.", "&amp; Étudiant."]'</i> <i class="a">data-i18n</i>=<i class="s">"hero-words"</i><i class="p">&gt;</i><i class="p">&lt;/</i><i class="t">span</i><i class="p">&gt;</i></div>
<div class="ln" style="top:571.75px">                    <i class="p">&lt;/</i><i class="t">h1</i><i class="p">&gt;</i></div>
<div class="ln" style="top:586.00px">                    <i class="p">&lt;</i><i class="t">p</i> <i class="a">class</i>=<i class="s">"hero-description reveal-text"</i> <i class="a">data-i18n</i>=<i class="s">"hero-desc"</i> <i class="a">data-html</i>=<i class="s">"true"</i><i class="p">&gt;</i></div>
<div class="ln" style="top:600.25px">                        Je ne code pas juste pour valider des diplômes, je le fais avant tout pour m'amuser et car j'aime voir mes idées même les plus folles prendre vie</div>
<div class="ln" style="top:614.50px">                    <i class="p">&lt;/</i><i class="t">p</i><i class="p">&gt;</i></div>
<div class="ln" style="top:628.75px">                    <i class="p">&lt;</i><i class="t">div</i> <i class="a">class</i>=<i class="s">"hero-buttons reveal-text"</i><i class="p">&gt;</i></div>
<div class="ln" style="top:643.00px">                        <i class="p">&lt;</i><i class="t">a</i> <i class="a">href</i>=<i class="s">"<u>#projects</u>"</i> <i class="a">class</i>=<i class="s">"btn btn-primary"</i> <i class="a">data-i18n</i>=<i class="s">"btn-projects"</i><i class="p">&gt;</i>Voir mes projets <i class="p">&lt;</i><i class="t">i</i> <i class="a">class</i>=<i class="s">"fas fa-arrow-right"</i><i class="p">&gt;</i><i class="p">&lt;/</i><i class="t">i</i><i class="p">&gt;</i><i class="p">&lt;/</i><i class="t">a</i><i class="p">&gt;</i></div>
<div class="ln" style="top:657.25px">                        <i class="p">&lt;</i><i class="t">button</i> <i class="a">type</i>=<i class="s">"button"</i> <i class="a">class</i>=<i class="s">"btn btn-outline"</i> <i class="a">id</i>=<i class="s">"cv-btn"</i> <i class="a">data-i18n</i>=<i class="s">"btn-cv"</i><i class="p">&gt;</i><i class="p">&lt;</i><i class="t">i</i> <i class="a">class</i>=<i class="s">"fas fa-lock"</i><i class="p">&gt;</i><i class="p">&lt;/</i><i class="t">i</i><i class="p">&gt;</i> Mon CV<i class="p">&lt;/</i><i class="t">button</i><i class="p">&gt;</i></div>
<div class="ln" style="top:671.50px">                    <i class="p">&lt;/</i><i class="t">div</i><i class="p">&gt;</i></div>
<div class="ln" style="top:685.75px">                <i class="p">&lt;/</i><i class="t">div</i><i class="p">&gt;</i></div>
<div class="ln" style="top:700.00px"></div>
<div class="ln" style="top:714.25px"></div>
<div class="ln" style="top:728.50px">                <i class="p">&lt;</i><i class="t">div</i> <i class="a">class</i>=<i class="s">"hero-visual fade-in"</i><i class="p">&gt;</i></div>
<div class="ln" style="top:742.75px">                    <i class="p">&lt;</i><i class="t">div</i> <i class="a">class</i>=<i class="s">"gradient-orb"</i><i class="p">&gt;</i><i class="p">&lt;/</i><i class="t">div</i><i class="p">&gt;</i></div>
<div class="ln" style="top:757.00px">                    <i class="p">&lt;</i><i class="t">div</i> <i class="a">class</i>=<i class="s">"glass-card floating"</i><i class="p">&gt;</i></div>
<div class="ln" style="top:771.25px">                        <i class="p">&lt;</i><i class="t">i</i> <i class="a">class</i>=<i class="s">"fas fa-code"</i><i class="p">&gt;</i><i class="p">&lt;/</i><i class="t">i</i><i class="p">&gt;</i></div>
<div id="sticky"></div>
<div class="num" style="top:69.60px">2</div>
<div class="ln" style="top:69.60px"><i class="p">&lt;</i><i class="t">html</i> <i class="a">lang</i>=<i class="s">"fr"</i><i class="p">&gt;</i></div>
<div class="num" style="top:83.85px">16</div>
<div class="ln" style="top:83.85px"><i class="p">&lt;</i><i class="t">body</i><i class="p">&gt;</i></div>
<div class="num" style="top:98.10px">18</div>
<div class="ln" style="top:98.10px">    <i class="p">&lt;</i><i class="t">header</i> <i class="a">class</i>=<i class="s">"site-header"</i><i class="p">&gt;</i></div>
<div class="num" style="top:112.35px">19</div>
<div class="ln" style="top:112.35px">        <i class="p">&lt;</i><i class="t">div</i> <i class="a">class</i>=<i class="s">"container header-inner"</i><i class="p">&gt;</i></div>
<svg style="left:1210px;top:68px" width="62" height="420" viewBox="1210 68 62 420"><path fill="#5e5e5e" d="M1215.3 69.3h3.7v1h-3.7zM1217.5 70.6h2.0v1h-2.0zM1217.3 71.7h4.5v1h-4.5zM1218.4 73.0h3.9v1h-3.9zM1243.2 73.0h6.3v1h-6.3zM1261.5 73.0h1.1v1h-1.1zM1217.3 74.2h1.9v1h-1.9zM1233.7 74.2h6.7v1h-6.7zM1244.5 74.2h3.1v1h-3.1zM1248.6 74.2h1.6v1h-1.6zM1257.9 74.2h5.6v1h-5.6zM1265.1 74.2h2.5v1h-2.5zM1217.3 75.5h4.5v1h-4.5zM1218.4 76.7h4.9v1h-4.9zM1242.7 76.7h2.1v1h-2.1zM1217.3 78.0h4.9v1h-4.9zM1239.2 78.0h7.0v1h-7.0zM1219.5 79.2h5.0v1h-5.0zM1251.5 79.2h4.2v1h-4.2zM1217.3 80.5h3.5v1h-3.5zM1217.3 81.7h5.8v1h-5.8zM1244.6 81.7h2.3v1h-2.3zM1216.4 83.2h1.5v1h-1.5zM1217.3 85.9h3.1v1h-3.1zM1219.9 87.9h5.6v1h-5.6zM1222.6 89.9h4.1v1h-4.1zM1222.6 91.1h4.3v1h-4.3zM1259.0 91.1h2.2v1h-2.2zM1222.6 92.4h3.9v1h-3.9zM1262.8 92.4h0.2v1h-0.2zM1222.6 93.6h3.5v1h-3.5zM1222.6 94.9h1.7v1h-1.7zM1222.6 96.1h2.0v1h-2.0zM1221.7 98.5h0.9v1h-0.9zM1222.6 100.5h1.7v1h-1.7zM1243.0 100.5h5.1v1h-5.1zM1249.8 100.5h4.5v1h-4.5zM1225.2 102.4h5.4v1h-5.4zM1226.3 103.7h2.0v1h-2.0zM1225.2 104.9h2.4v1h-2.4zM1225.2 106.2h1.5v1h-1.5zM1219.0 107.7h1.5v1h-1.5zM1217.9 109.0h2.0v1h-2.0zM1220.1 111.7h3.1v1h-3.1zM1217.9 113.0h4.0v1h-4.0zM1222.6 114.4h5.4v1h-5.4zM1224.8 115.6h5.4v1h-5.4zM1226.3 117.7h5.0v1h-5.0zM1261.5 117.7h5.6v1h-5.6zM1225.2 118.9h4.9v1h-4.9zM1256.2 118.9h4.1v1h-4.1zM1225.2 121.0h6.6v1h-6.6zM1226.3 122.2h4.2v1h-4.2zM1245.8 122.2h3.8v1h-3.8zM1268.7 122.2h0.6v1h-0.6zM1227.4 124.3h6.6v1h-6.6zM1261.1 124.3h5.8v1h-5.8zM1267.5 124.3h2.5v1h-2.5zM1225.2 125.5h5.5v1h-5.5zM1248.8 125.5h2.4v1h-2.4zM1223.7 128.3h3.2v1h-3.2zM1222.6 129.5h2.4v1h-2.4zM1225.4 131.6h6.5v1h-6.5zM1223.2 132.8h3.3v1h-3.3zM1229.6 135.5h4.4v1h-4.4zM1251.1 135.5h3.7v1h-3.7zM1228.5 136.8h5.7v1h-5.7zM1228.5 138.0h4.4v1h-4.4zM1228.5 140.2h3.2v1h-3.2zM1228.5 141.4h5.4v1h-5.4zM1257.5 141.4h3.5v1h-3.5zM1228.5 142.7h2.6v1h-2.6zM1228.5 143.9h2.3v1h-2.3zM1259.6 143.9h1.7v1h-1.7zM1262.4 143.9h0.3v1h-0.3zM1223.2 146.1h3.0v1h-3.0zM1224.3 147.4h2.2v1h-2.2zM1221.0 150.1h0.9v1h-0.9zM1221.9 152.8h4.0v1h-4.0zM1219.3 158.7h2.5v1h-2.5zM1222.6 161.4h3.3v1h-3.3zM1265.3 161.4h2.0v1h-2.0zM1223.7 162.6h5.2v1h-5.2zM1259.2 162.6h3.3v1h-3.3zM1222.6 163.9h7.0v1h-7.0zM1222.6 165.1h3.4v1h-3.4zM1249.4 165.1h1.7v1h-1.7zM1227.4 168.0h4.4v1h-4.4zM1225.2 169.2h3.7v1h-3.7zM1249.9 169.2h0.8v1h-0.8zM1227.4 170.5h3.5v1h-3.5zM1225.2 171.8h6.6v1h-6.6zM1226.3 173.0h2.7v1h-2.7zM1224.6 177.3h2.6v1h-2.6zM1225.9 179.9h5.9v1h-5.9zM1228.1 181.2h3.9v1h-3.9zM1229.6 182.6h4.8v1h-4.8zM1251.3 182.6h7.0v1h-7.0zM1258.8 182.6h3.6v1h-3.6zM1264.1 182.6h1.9v1h-1.9zM1228.5 183.8h2.2v1h-2.2zM1226.8 189.2h0.4v1h-0.4zM1227.0 191.2h2.0v1h-2.0zM1225.9 192.5h4.2v1h-4.2zM1228.5 193.9h6.7v1h-6.7zM1258.1 193.9h3.7v1h-3.7zM1230.7 195.1h3.6v1h-3.6zM1251.6 195.1h4.4v1h-4.4zM1257.1 195.1h2.4v1h-2.4zM1219.3 205.1h5.4v1h-5.4zM1223.2 207.1h4.2v1h-4.2zM1238.1 207.1h6.2v1h-6.2zM1257.0 207.1h3.8v1h-3.8zM1223.2 208.3h3.6v1h-3.6zM1243.6 208.3h2.7v1h-2.7zM1246.9 208.3h7.0v1h-7.0zM1223.2 209.6h4.6v1h-4.6zM1223.2 211.7h5.9v1h-5.9zM1249.9 211.7h1.2v1h-1.2zM1223.2 213.0h6.5v1h-6.5zM1232.7 215.0h2.3v1h-2.3zM1263.9 215.0h5.6v1h-5.6zM1232.7 216.3h3.8v1h-3.8zM1232.7 217.5h3.1v1h-3.1zM1232.1 220.3h5.7v1h-5.7zM1229.9 221.6h6.0v1h-6.0zM1229.9 222.8h5.9v1h-5.9zM1233.4 225.6h3.7v1h-3.7zM1265.9 225.6h2.7v1h-2.7zM1232.3 226.9h6.5v1h-6.5zM1231.2 228.1h3.8v1h-3.8zM1231.2 229.4h1.6v1h-1.6zM1258.5 229.4h0.3v1h-0.3zM1225.9 236.2h1.8v1h-1.8zM1232.7 238.9h4.1v1h-4.1zM1251.0 238.9h4.1v1h-4.1zM1232.7 240.1h4.7v1h-4.7zM1230.5 241.4h5.9v1h-5.9zM1261.6 241.4h4.8v1h-4.8zM1231.0 244.2h2.0v1h-2.0zM1229.9 245.4h3.1v1h-3.1zM1247.0 245.4h3.5v1h-3.5zM1233.4 248.2h2.9v1h-2.9zM1260.3 248.2h4.6v1h-4.6zM1231.2 249.4h2.0v1h-2.0zM1233.4 250.7h5.1v1h-5.1zM1254.1 250.7h4.7v1h-4.7zM1232.3 251.9h2.8v1h-2.8zM1228.1 258.8h6.4v1h-6.4zM1231.6 261.4h3.3v1h-3.3zM1231.6 262.7h4.0v1h-4.0zM1230.5 263.9h3.1v1h-3.1zM1245.0 263.9h4.3v1h-4.3zM1256.8 263.9h1.4v1h-1.4zM1231.0 266.7h4.6v1h-4.6zM1254.2 266.7h6.1v1h-6.1zM1229.9 268.0h4.9v1h-4.9zM1229.9 269.2h6.3v1h-6.3zM1231.2 271.3h4.0v1h-4.0zM1258.8 271.3h6.3v1h-6.3zM1231.2 272.6h2.0v1h-2.0zM1247.5 272.6h4.4v1h-4.4zM1231.2 273.8h3.7v1h-3.7zM1232.3 275.1h4.8v1h-4.8zM1233.8 276.0h5.1v1h-5.1zM1219.7 287.9h6.7v1h-6.7zM1220.8 289.2h1.7v1h-1.7zM1223.2 291.2h4.4v1h-4.4zM1224.3 292.5h3.2v1h-3.2zM1241.6 292.5h6.8v1h-6.8zM1224.6 294.5h6.9v1h-6.9zM1226.8 295.8h6.2v1h-6.2zM1253.8 295.8h2.5v1h-2.5zM1224.6 297.0h3.1v1h-3.1zM1226.8 298.3h6.8v1h-6.8zM1254.8 298.3h4.5v1h-4.5zM1225.9 299.8h4.4v1h-4.4zM1225.9 301.1h4.2v1h-4.2zM1230.7 303.2h2.0v1h-2.0zM1229.6 305.8h5.0v1h-5.0zM1257.9 305.8h6.5v1h-6.5zM1228.5 307.1h4.5v1h-4.5zM1257.9 307.1h1.2v1h-1.2zM1220.8 314.4h5.9v1h-5.9zM1223.2 316.4h2.0v1h-2.0zM1252.0 316.4h3.2v1h-3.2zM1224.3 317.6h6.3v1h-6.3zM1250.0 317.6h4.4v1h-4.4zM1224.3 318.9h3.4v1h-3.4zM1254.5 318.9h4.6v1h-4.6zM1262.6 318.9h5.4v1h-5.4zM1227.2 321.0h4.3v1h-4.3zM1229.4 322.3h5.5v1h-5.5zM1231.2 323.7h3.2v1h-3.2zM1231.2 324.9h3.7v1h-3.7zM1232.3 327.7h4.7v1h-4.7zM1263.8 327.7h3.8v1h-3.8zM1232.3 328.9h3.4v1h-3.4zM1231.2 331.6h3.2v1h-3.2zM1253.6 331.6h4.3v1h-4.3zM1231.2 332.9h2.4v1h-2.4zM1231.2 334.1h3.9v1h-3.9zM1255.1 334.1h2.1v1h-2.1zM1225.2 340.2h2.0v1h-2.0zM1242.9 340.2h1.6v1h-1.6zM1225.2 341.5h4.2v1h-4.2zM1246.0 341.5h2.4v1h-2.4zM1265.1 341.5h4.3v1h-4.3zM1227.2 343.5h5.2v1h-5.2zM1229.4 344.8h2.0v1h-2.0zM1232.3 348.2h4.9v1h-4.9zM1256.6 348.2h6.7v1h-6.7zM1231.2 349.4h5.6v1h-5.6zM1251.0 349.4h4.6v1h-4.6zM1233.4 350.7h2.7v1h-2.7zM1232.3 351.9h5.9v1h-5.9zM1229.2 354.1h5.8v1h-5.8zM1230.3 355.4h5.4v1h-5.4zM1233.4 358.1h5.5v1h-5.5zM1231.2 359.4h3.3v1h-3.3zM1231.2 360.6h3.1v1h-3.1zM1231.2 361.9h6.0v1h-6.0zM1229.2 364.1h2.7v1h-2.7zM1231.4 365.3h6.7v1h-6.7zM1229.2 366.6h6.9v1h-6.9zM1231.2 368.7h2.9v1h-2.9zM1231.2 370.0h5.7v1h-5.7zM1252.4 370.0h5.2v1h-5.2zM1231.2 371.2h7.0v1h-7.0zM1218.6 380.6h4.6v1h-4.6zM1237.9 380.6h3.9v1h-3.9zM1220.2 380.0h6.6v1h-6.6zM1219.1 381.2h4.0v1h-4.0zM1224.0 383.5h6.0v1h-6.0zM1249.0 383.5h5.1v1h-5.1zM1255.2 383.5h2.5v1h-2.5zM1268.7 383.5h0.1v1h-0.1zM1224.0 384.8h4.6v1h-4.6zM1244.0 384.8h6.0v1h-6.0zM1266.1 384.8h1.5v1h-1.5zM1229.6 387.0h4.5v1h-4.5zM1231.8 388.3h4.6v1h-4.6zM1258.9 388.3h3.1v1h-3.1zM1229.6 389.5h3.6v1h-3.6zM1249.6 389.5h2.8v1h-2.8zM1254.1 389.5h6.5v1h-6.5zM1229.6 390.8h5.7v1h-5.7zM1228.2 395.4h5.3v1h-5.3zM1252.6 395.4h1.8v1h-1.8zM1228.2 396.7h5.5v1h-5.5zM1228.2 398.2h5.3v1h-5.3zM1228.2 399.5h5.3v1h-5.3zM1228.2 401.7h1.9v1h-1.9zM1242.7 401.7h5.3v1h-5.3zM1249.1 401.7h4.5v1h-4.5zM1265.4 401.7h4.6v1h-4.6zM1228.2 403.0h4.3v1h-4.3zM1229.3 405.9h3.3v1h-3.3zM1256.3 405.9h2.8v1h-2.8zM1260.2 405.9h5.4v1h-5.4zM1230.4 407.2h6.6v1h-6.6zM1228.3 408.7h2.4v1h-2.4zM1266.5 408.7h3.5v1h-3.5zM1227.2 410.0h5.5v1h-5.5zM1220.6 418.5h3.3v1h-3.3zM1218.4 419.8h5.9v1h-5.9zM1224.4 421.3h5.4v1h-5.4zM1224.4 422.6h3.8v1h-3.8zM1225.5 426.2h5.2v1h-5.2zM1223.3 427.5h6.2v1h-6.2zM1227.5 429.0h1.8v1h-1.8zM1228.6 430.3h6.2v1h-6.2zM1228.6 431.5h2.9v1h-2.9zM1224.4 435.3h4.6v1h-4.6zM1223.3 436.6h5.9v1h-5.9zM1228.6 438.8h3.9v1h-3.9zM1245.7 438.8h6.0v1h-6.0zM1228.6 440.1h5.8v1h-5.8zM1223.3 444.4h3.1v1h-3.1zM1223.3 445.7h1.7v1h-1.7zM1236.6 445.7h4.9v1h-4.9zM1228.6 447.9h6.1v1h-6.1zM1252.6 447.9h1.6v1h-1.6zM1263.8 447.9h2.2v1h-2.2zM1227.5 449.2h3.1v1h-3.1zM1223.4 451.4h2.0v1h-2.0zM1222.6 454.2h4.0v1h-4.0zM1245.2 454.2h1.5v1h-1.5zM1222.6 455.5h2.4v1h-2.4zM1216.3 459.1h5.9v1h-5.9zM1216.3 460.4h4.9v1h-4.9zM1220.5 461.9h3.4v1h-3.4zM1242.8 461.9h3.2v1h-3.2zM1220.5 463.2h2.6v1h-2.6zM1223.7 465.4h5.4v1h-5.4zM1246.9 465.4h6.5v1h-6.5zM1222.6 466.7h5.8v1h-5.8zM1252.9 466.7h5.1v1h-5.1zM1259.1 466.7h5.0v1h-5.0zM1225.4 468.2h6.1v1h-6.1zM1249.6 468.2h6.7v1h-6.7zM1266.3 468.2h2.0v1h-2.0zM1227.6 469.5h3.3v1h-3.3zM1225.4 470.7h6.8v1h-6.8zM1222.6 473.1h6.4v1h-6.4zM1223.7 474.4h6.9v1h-6.9zM1216.0 484.3h3.3v1h-3.3z"/><path fill="#46729a" d="M1219.5 69.3h1.9v1h-1.9zM1222.4 71.7h6.0v1h-6.0zM1250.6 71.7h3.8v1h-3.8zM1255.0 71.7h4.6v1h-4.6zM1260.2 71.7h2.1v1h-2.1zM1262.8 71.7h3.5v1h-3.5zM1266.9 71.7h1.4v1h-1.4zM1223.3 73.0h4.1v1h-4.1zM1220.3 74.2h3.4v1h-3.4zM1222.4 75.5h6.0v1h-6.0zM1253.3 75.5h1.6v1h-1.6zM1224.3 76.7h6.7v1h-6.7zM1252.6 76.7h2.1v1h-2.1zM1222.7 78.0h5.0v1h-5.0zM1260.4 78.0h2.6v1h-2.6zM1264.2 78.0h1.9v1h-1.9zM1225.1 79.2h5.3v1h-5.3zM1240.4 79.2h4.4v1h-4.4zM1246.0 79.2h5.0v1h-5.0zM1221.3 80.5h6.9v1h-6.9zM1252.6 80.5h4.2v1h-4.2zM1223.6 81.7h4.1v1h-4.1zM1247.5 81.7h4.9v1h-4.9zM1221.0 85.9h5.7v1h-5.7zM1227.2 87.9h5.1v1h-5.1zM1227.2 89.9h4.6v1h-4.6zM1256.3 89.9h4.3v1h-4.3zM1227.4 91.1h5.3v1h-5.3zM1227.0 92.4h5.2v1h-5.2zM1226.6 93.6h5.5v1h-5.5zM1242.2 93.6h3.6v1h-3.6zM1224.9 94.9h3.0v1h-3.0zM1225.1 96.1h1.9v1h-1.9zM1224.8 100.5h5.5v1h-5.5zM1231.2 102.4h3.7v1h-3.7zM1230.0 103.7h6.3v1h-6.3zM1229.3 104.9h1.5v1h-1.5zM1228.4 106.2h2.0v1h-2.0zM1229.7 114.4h5.5v1h-5.5zM1230.8 115.6h2.0v1h-2.0zM1231.8 117.7h4.2v1h-4.2zM1230.7 118.9h1.9v1h-1.9zM1260.8 118.9h6.4v1h-6.4zM1232.4 121.0h3.1v1h-3.1zM1231.1 122.2h2.4v1h-2.4zM1235.1 124.3h6.2v1h-6.2zM1232.5 125.5h4.9v1h-4.9zM1225.5 129.5h0.3v1h-0.3zM1233.6 131.6h3.9v1h-3.9zM1227.6 132.8h2.9v1h-2.9zM1235.7 135.5h3.0v1h-3.0zM1235.9 136.8h6.8v1h-6.8zM1233.5 138.0h6.7v1h-6.7zM1232.3 140.2h3.6v1h-3.6zM1260.3 140.2h2.6v1h-2.6zM1235.0 141.4h1.8v1h-1.8zM1231.7 142.7h2.8v1h-2.8zM1231.4 143.9h5.4v1h-5.4zM1255.4 143.9h2.5v1h-2.5zM1227.1 147.4h0.1v1h-0.1zM1227.0 152.8h3.5v1h-3.5zM1241.4 154.8h3.1v1h-3.1zM1245.1 154.8h2.8v1h-2.8zM1227.0 161.4h4.0v1h-4.0zM1229.5 162.6h5.8v1h-5.8zM1252.3 162.6h6.4v1h-6.4zM1263.6 162.6h0.9v1h-0.9zM1230.1 163.9h1.5v1h-1.5zM1245.6 163.9h4.8v1h-4.8zM1262.6 163.9h2.1v1h-2.1zM1226.5 165.1h2.6v1h-2.6zM1232.4 168.0h3.7v1h-3.7zM1229.5 169.2h3.9v1h-3.9zM1247.8 169.2h1.6v1h-1.6zM1231.5 170.5h2.3v1h-2.3zM1233.5 171.8h2.0v1h-2.0zM1230.7 173.0h6.7v1h-6.7zM1245.0 173.0h1.7v1h-1.7zM1228.3 172.0h3.7v1h-3.7zM1238.3 172.0h3.2v1h-3.2zM1259.2 172.0h2.2v1h-2.2zM1269.4 172.0h0.6v1h-0.6zM1246.5 173.2h2.2v1h-2.2zM1249.8 173.2h2.5v1h-2.5zM1265.5 173.2h1.6v1h-1.6zM1233.2 174.5h3.9v1h-3.9zM1249.7 174.5h2.8v1h-2.8zM1229.4 175.8h3.9v1h-3.9zM1251.4 175.8h2.2v1h-2.2zM1254.7 175.8h2.3v1h-2.3zM1257.5 175.8h2.0v1h-2.0zM1232.4 179.9h4.0v1h-4.0zM1233.7 181.2h2.9v1h-2.9zM1236.2 182.6h6.0v1h-6.0zM1231.8 183.8h5.4v1h-5.4zM1241.8 186.5h4.5v1h-4.5zM1250.8 186.5h2.9v1h-2.9zM1255.4 186.5h2.8v1h-2.8zM1230.7 191.2h5.4v1h-5.4zM1230.7 192.5h6.8v1h-6.8zM1235.8 193.9h4.2v1h-4.2zM1234.9 195.1h6.7v1h-6.7zM1239.6 196.5h4.9v1h-4.9zM1245.6 196.5h2.5v1h-2.5zM1240.1 197.8h3.5v1h-3.5zM1245.3 197.8h2.1v1h-2.1zM1229.9 199.8h3.5v1h-3.5zM1218.6 202.3h3.5v1h-3.5zM1225.3 205.1h2.9v1h-2.9zM1228.0 207.1h1.7v1h-1.7zM1244.8 207.1h5.4v1h-5.4zM1227.4 208.3h1.6v1h-1.6zM1228.4 209.6h6.0v1h-6.0zM1230.3 211.7h3.5v1h-3.5zM1230.3 213.0h4.4v1h-4.4zM1235.6 215.0h2.5v1h-2.5zM1254.5 215.0h5.2v1h-5.2zM1237.1 216.3h4.1v1h-4.1zM1252.4 216.3h4.2v1h-4.2zM1237.6 217.5h3.6v1h-3.6zM1238.3 220.3h1.7v1h-1.7zM1250.8 220.3h3.4v1h-3.4zM1237.0 221.6h3.5v1h-3.5zM1236.8 222.8h2.6v1h-2.6zM1249.6 222.8h3.7v1h-3.7zM1237.6 225.6h1.5v1h-1.5zM1252.9 225.6h5.8v1h-5.8zM1260.4 225.6h4.9v1h-4.9zM1239.4 226.9h3.5v1h-3.5zM1261.6 226.9h3.9v1h-3.9zM1266.0 226.9h1.8v1h-1.8zM1236.7 228.1h4.0v1h-4.0zM1233.3 229.4h4.0v1h-4.0zM1232.5 231.6h3.5v1h-3.5zM1228.2 236.2h1.6v1h-1.6zM1237.4 238.9h2.3v1h-2.3zM1256.2 238.9h5.8v1h-5.8zM1238.0 240.1h3.6v1h-3.6zM1238.1 241.4h3.4v1h-3.4zM1234.0 244.2h5.7v1h-5.7zM1252.6 244.2h4.1v1h-4.1zM1234.1 245.4h3.7v1h-3.7zM1251.1 245.4h2.4v1h-2.4zM1254.0 245.4h3.4v1h-3.4zM1237.4 248.2h3.8v1h-3.8zM1234.3 249.4h4.6v1h-4.6zM1258.6 249.4h1.8v1h-1.8zM1240.1 250.7h1.8v1h-1.8zM1235.7 251.9h6.5v1h-6.5zM1232.5 254.1h3.5v1h-3.5zM1235.0 258.8h5.8v1h-5.8zM1235.5 261.4h4.1v1h-4.1zM1249.6 261.4h5.4v1h-5.4zM1265.0 261.4h1.6v1h-1.6zM1237.3 262.7h2.1v1h-2.1zM1234.2 263.9h1.8v1h-1.8zM1249.9 263.9h5.8v1h-5.8zM1236.2 266.7h6.1v1h-6.1zM1235.3 268.0h4.7v1h-4.7zM1237.8 269.2h2.0v1h-2.0zM1253.1 269.2h2.9v1h-2.9zM1235.7 271.3h2.2v1h-2.2zM1266.8 271.3h3.2v1h-3.2zM1233.7 272.6h2.4v1h-2.4zM1242.9 272.6h2.9v1h-2.9zM1259.9 272.6h0.5v1h-0.5zM1235.5 273.8h4.5v1h-4.5zM1237.6 275.1h3.7v1h-3.7zM1253.5 275.1h5.4v1h-5.4zM1260.1 275.1h6.0v1h-6.0zM1239.5 276.0h3.5v1h-3.5zM1231.2 278.0h3.5v1h-3.5zM1224.6 283.9h3.5v1h-3.5zM1226.9 287.9h6.0v1h-6.0zM1223.1 289.2h2.9v1h-2.9zM1239.1 289.2h1.1v1h-1.1zM1228.2 291.2h3.9v1h-3.9zM1250.5 291.2h6.1v1h-6.1zM1229.2 292.5h4.1v1h-4.1zM1232.6 294.5h1.8v1h-1.8zM1266.1 294.5h3.9v1h-3.9zM1234.7 295.8h3.0v1h-3.0zM1244.6 295.8h4.2v1h-4.2zM1229.4 297.0h4.4v1h-4.4zM1258.9 297.0h4.7v1h-4.7zM1234.1 298.3h6.8v1h-6.8zM1250.6 298.3h3.1v1h-3.1zM1230.8 299.8h3.8v1h-3.8zM1231.8 301.1h4.6v1h-4.6zM1233.9 303.2h3.2v1h-3.2zM1247.5 303.2h5.3v1h-5.3zM1254.5 303.2h5.0v1h-5.0zM1235.2 305.8h3.4v1h-3.4zM1252.0 305.8h5.4v1h-5.4zM1234.2 307.1h6.3v1h-6.3zM1252.8 307.1h2.4v1h-2.4zM1224.6 310.4h3.5v1h-3.5zM1227.3 314.4h5.3v1h-5.3zM1225.9 316.4h3.4v1h-3.4zM1269.3 316.4h0.7v1h-0.7zM1232.4 317.6h1.6v1h-1.6zM1228.3 318.9h3.6v1h-3.6zM1251.4 318.9h2.6v1h-2.6zM1232.1 321.0h6.2v1h-6.2zM1258.4 321.0h3.7v1h-3.7zM1236.7 322.3h1.7v1h-1.7zM1235.0 323.7h3.1v1h-3.1zM1235.5 324.9h2.5v1h-2.5zM1248.0 324.9h3.7v1h-3.7zM1267.0 324.9h3.0v1h-3.0zM1237.5 327.7h2.1v1h-2.1zM1237.4 328.9h4.3v1h-4.3zM1251.4 328.9h1.7v1h-1.7zM1235.0 331.6h5.3v1h-5.3zM1235.2 332.9h6.1v1h-6.1zM1236.2 334.1h3.1v1h-3.1zM1258.9 334.1h0.4v1h-0.4zM1229.9 336.3h3.5v1h-3.5zM1228.3 340.2h5.0v1h-5.0zM1231.2 341.5h5.5v1h-5.5zM1259.0 341.5h1.5v1h-1.5zM1232.9 343.5h6.5v1h-6.5zM1232.5 344.8h4.3v1h-4.3zM1237.8 348.2h5.5v1h-5.5zM1237.3 349.4h2.3v1h-2.3zM1237.2 350.7h5.1v1h-5.1zM1259.4 350.7h4.4v1h-4.4zM1238.8 351.9h6.2v1h-6.2zM1235.5 354.1h3.7v1h-3.7zM1237.4 355.4h6.5v1h-6.5zM1240.0 358.1h2.4v1h-2.4zM1256.6 358.1h2.8v1h-2.8zM1235.1 359.4h1.7v1h-1.7zM1246.6 359.4h6.1v1h-6.1zM1236.0 360.6h6.1v1h-6.1zM1238.9 361.9h6.1v1h-6.1zM1232.5 364.1h4.7v1h-4.7zM1239.2 365.3h1.5v1h-1.5zM1236.7 366.6h5.0v1h-5.0zM1234.7 368.7h7.0v1h-7.0zM1238.0 370.0h4.3v1h-4.3zM1238.7 371.2h2.2v1h-2.2zM1232.5 374.0h3.5v1h-3.5zM1223.7 376.5h3.5v1h-3.5zM1224.4 380.6h1.9v1h-1.9zM1228.5 380.0h3.3v1h-3.3zM1224.2 381.2h6.3v1h-6.3zM1231.1 383.5h5.5v1h-5.5zM1258.2 383.5h2.0v1h-2.0zM1261.3 383.5h5.8v1h-5.8zM1229.7 384.8h1.8v1h-1.8zM1251.0 384.8h4.5v1h-4.5zM1256.1 384.8h5.1v1h-5.1zM1262.3 384.8h2.8v1h-2.8zM1235.8 387.0h4.6v1h-4.6zM1236.9 388.3h2.9v1h-2.9zM1233.8 389.5h3.3v1h-3.3zM1236.4 390.8h3.1v1h-3.1zM1235.2 395.4h2.7v1h-2.7zM1234.3 396.7h5.6v1h-5.6zM1234.1 398.2h2.2v1h-2.2zM1263.7 398.2h6.3v1h-6.3zM1234.0 399.5h5.0v1h-5.0zM1230.6 401.7h2.6v1h-2.6zM1233.6 403.0h5.3v1h-5.3zM1234.3 405.9h4.5v1h-4.5zM1250.3 405.9h4.3v1h-4.3zM1238.1 407.2h2.9v1h-2.9zM1261.3 407.2h4.0v1h-4.0zM1231.8 408.7h2.8v1h-2.8zM1255.2 408.7h5.1v1h-5.1zM1233.3 410.0h5.7v1h-5.7zM1245.7 410.0h4.9v1h-4.9zM1225.4 412.9h3.5v1h-3.5zM1216.3 415.4h3.5v1h-3.5zM1224.4 418.5h3.0v1h-3.0zM1225.4 419.8h6.5v1h-6.5zM1230.9 421.3h6.8v1h-6.8zM1257.5 421.3h6.9v1h-6.9zM1228.7 422.6h2.1v1h-2.1zM1231.8 426.2h5.7v1h-5.7zM1230.0 427.5h4.6v1h-4.6zM1231.0 429.0h6.1v1h-6.1zM1255.9 429.0h2.5v1h-2.5zM1236.5 430.3h4.3v1h-4.3zM1232.1 431.5h2.2v1h-2.2zM1229.5 435.3h5.5v1h-5.5zM1230.3 436.6h2.6v1h-2.6zM1233.1 438.8h1.8v1h-1.8zM1252.3 438.8h1.6v1h-1.6zM1235.0 440.1h3.8v1h-3.8zM1227.0 444.4h6.3v1h-6.3zM1226.7 445.7h2.4v1h-2.4zM1235.2 447.9h5.1v1h-5.1zM1258.5 447.9h4.8v1h-4.8zM1231.2 449.2h6.8v1h-6.8zM1227.2 454.2h1.7v1h-1.7zM1257.7 454.2h1.4v1h-1.4zM1225.6 455.5h4.3v1h-4.3zM1222.7 459.1h5.3v1h-5.3zM1221.8 460.4h3.1v1h-3.1zM1224.4 461.9h1.7v1h-1.7zM1223.7 463.2h5.3v1h-5.3zM1241.0 463.2h6.5v1h-6.5zM1230.3 465.4h4.7v1h-4.7zM1253.9 465.4h3.9v1h-3.9zM1258.9 465.4h5.6v1h-5.6zM1229.5 466.7h5.6v1h-5.6zM1232.6 468.2h5.1v1h-5.1zM1263.5 468.2h2.3v1h-2.3zM1232.1 469.5h2.5v1h-2.5zM1232.7 470.7h6.2v1h-6.2zM1255.2 470.7h5.2v1h-5.2zM1230.7 473.1h1.9v1h-1.9zM1231.1 474.4h6.3v1h-6.3zM1224.0 476.6h3.5v1h-3.5zM1219.9 484.3h1.4v1h-1.4z"/><path fill="#6a90b0" d="M1222.0 69.3h1.3v1h-1.3zM1229.0 71.7h6.7v1h-6.7zM1229.1 73.0h3.5v1h-3.5zM1250.6 73.0h4.8v1h-4.8zM1224.8 74.2h4.8v1h-4.8zM1251.4 74.2h2.4v1h-2.4zM1229.5 75.5h5.4v1h-5.4zM1255.4 75.5h2.9v1h-2.9zM1231.6 76.7h4.0v1h-4.0zM1228.8 78.0h4.8v1h-4.8zM1247.9 78.0h4.2v1h-4.2zM1231.5 79.2h4.4v1h-4.4zM1229.3 80.5h4.1v1h-4.1zM1245.5 80.5h1.9v1h-1.9zM1228.3 81.7h3.9v1h-3.9zM1237.0 81.7h4.0v1h-4.0zM1264.8 81.7h1.6v1h-1.6zM1227.8 85.9h2.1v1h-2.1zM1234.0 87.9h6.0v1h-6.0zM1232.9 89.9h5.3v1h-5.3zM1246.2 89.9h6.4v1h-6.4zM1253.2 89.9h2.6v1h-2.6zM1261.1 89.9h5.7v1h-5.7zM1234.4 91.1h4.3v1h-4.3zM1232.7 92.4h6.4v1h-6.4zM1251.5 92.4h2.7v1h-2.7zM1232.6 93.6h3.4v1h-3.4zM1246.9 93.6h4.3v1h-4.3zM1228.4 94.9h6.0v1h-6.0zM1240.9 94.9h5.4v1h-5.4zM1227.5 96.1h4.0v1h-4.0zM1230.9 100.5h4.3v1h-4.3zM1236.0 102.4h6.9v1h-6.9zM1237.4 103.7h1.4v1h-1.4zM1231.9 104.9h6.8v1h-6.8zM1231.5 106.2h4.3v1h-4.3zM1239.7 106.2h0.4v1h-0.4zM1235.8 114.4h3.3v1h-3.3zM1233.3 115.6h2.2v1h-2.2zM1236.6 117.7h4.0v1h-4.0zM1247.3 117.7h5.1v1h-5.1zM1254.2 117.7h2.9v1h-2.9zM1268.8 117.7h1.2v1h-1.2zM1233.2 118.9h3.3v1h-3.3zM1243.1 118.9h1.6v1h-1.6zM1246.3 118.9h3.0v1h-3.0zM1236.1 121.0h6.0v1h-6.0zM1235.1 122.2h5.2v1h-5.2zM1242.4 124.3h2.1v1h-2.1zM1237.9 125.5h5.0v1h-5.0zM1238.0 131.6h2.4v1h-2.4zM1231.1 132.8h6.4v1h-6.4zM1239.3 135.5h4.2v1h-4.2zM1256.5 135.5h6.5v1h-6.5zM1244.5 136.8h1.5v1h-1.5zM1241.9 138.0h2.0v1h-2.0zM1246.4 138.0h2.8v1h-2.8zM1236.4 140.2h5.8v1h-5.8zM1237.4 141.4h4.2v1h-4.2zM1235.0 142.7h3.0v1h-3.0zM1249.4 142.7h3.8v1h-3.8zM1253.8 142.7h3.1v1h-3.1zM1237.3 143.9h3.7v1h-3.7zM1232.2 154.8h4.4v1h-4.4zM1237.7 154.8h2.6v1h-2.6zM1249.0 154.8h2.9v1h-2.9zM1252.4 154.8h4.5v1h-4.5zM1231.6 161.4h4.3v1h-4.3zM1243.8 161.4h3.7v1h-3.7zM1254.3 161.4h6.9v1h-6.9zM1261.8 161.4h3.0v1h-3.0zM1236.3 162.6h3.1v1h-3.1zM1232.2 163.9h6.1v1h-6.1zM1242.2 163.9h2.8v1h-2.8zM1230.2 165.1h1.7v1h-1.7zM1243.9 165.1h4.9v1h-4.9zM1252.7 165.1h1.8v1h-1.8zM1237.2 168.0h3.8v1h-3.8zM1256.8 168.0h0.9v1h-0.9zM1234.0 169.2h3.8v1h-3.8zM1234.9 170.5h2.4v1h-2.4zM1249.7 170.5h2.2v1h-2.2zM1236.1 171.8h5.0v1h-5.0zM1238.0 173.0h3.6v1h-3.6zM1232.5 173.2h4.6v1h-4.6zM1228.3 174.5h4.4v1h-4.4zM1238.8 174.5h3.7v1h-3.7zM1253.0 174.5h3.1v1h-3.1zM1257.8 174.5h0.4v1h-0.4zM1243.3 175.8h3.5v1h-3.5zM1247.4 175.8h3.5v1h-3.5zM1236.9 179.9h5.0v1h-5.0zM1247.8 179.9h6.8v1h-6.8zM1237.2 181.2h1.7v1h-1.7zM1243.8 181.2h2.4v1h-2.4zM1242.7 182.6h4.3v1h-4.3zM1266.6 182.6h2.7v1h-2.7zM1238.3 183.8h5.0v1h-5.0zM1255.1 183.8h6.3v1h-6.3zM1235.4 185.2h4.5v1h-4.5zM1254.1 185.2h2.1v1h-2.1zM1261.7 185.2h4.9v1h-4.9zM1267.2 185.2h2.1v1h-2.1zM1269.9 185.2h0.1v1h-0.1zM1229.9 186.5h4.5v1h-4.5zM1238.9 186.5h2.3v1h-2.3zM1248.0 186.5h2.3v1h-2.3zM1259.3 186.5h4.8v1h-4.8zM1236.7 191.2h5.4v1h-5.4zM1248.4 191.2h2.4v1h-2.4zM1251.4 191.2h3.1v1h-3.1zM1238.6 192.5h6.8v1h-6.8zM1240.6 193.9h6.7v1h-6.7zM1262.3 193.9h3.8v1h-3.8zM1242.1 195.1h4.4v1h-4.4zM1248.7 196.5h2.8v1h-2.8zM1252.0 196.5h4.9v1h-4.9zM1267.0 196.5h2.6v1h-2.6zM1229.9 197.8h3.4v1h-3.4zM1267.6 197.8h1.7v1h-1.7zM1229.8 205.1h4.2v1h-4.2zM1230.3 207.1h2.4v1h-2.4zM1269.9 207.1h0.1v1h-0.1zM1230.7 208.3h6.5v1h-6.5zM1234.9 209.6h3.4v1h-3.4zM1234.8 211.7h3.3v1h-3.3zM1235.8 213.0h5.0v1h-5.0zM1239.8 215.0h3.4v1h-3.4zM1241.8 216.3h4.2v1h-4.2zM1242.8 217.5h7.0v1h-7.0zM1254.0 217.5h5.0v1h-5.0zM1241.7 220.3h4.9v1h-4.9zM1242.2 221.6h3.7v1h-3.7zM1240.5 222.8h2.2v1h-2.2zM1239.7 225.6h6.0v1h-6.0zM1243.5 226.9h5.8v1h-5.8zM1241.2 228.1h5.2v1h-5.2zM1252.8 228.1h4.5v1h-4.5zM1262.3 228.1h3.8v1h-3.8zM1266.7 228.1h1.1v1h-1.1zM1237.9 229.4h6.6v1h-6.6zM1251.9 229.4h5.5v1h-5.5zM1230.4 236.2h6.4v1h-6.4zM1240.2 238.9h3.5v1h-3.5zM1263.1 238.9h3.1v1h-3.1zM1267.3 238.9h2.7v1h-2.7zM1243.3 240.1h4.8v1h-4.8zM1242.1 241.4h4.5v1h-4.5zM1240.4 244.2h3.7v1h-3.7zM1238.3 245.4h2.9v1h-2.9zM1243.0 248.2h5.7v1h-5.7zM1257.8 248.2h2.0v1h-2.0zM1266.6 248.2h3.4v1h-3.4zM1239.5 249.4h6.8v1h-6.8zM1261.0 249.4h5.8v1h-5.8zM1242.5 250.7h3.2v1h-3.2zM1242.8 251.9h4.1v1h-4.1zM1241.4 258.8h6.6v1h-6.6zM1240.7 261.4h2.3v1h-2.3zM1240.0 262.7h5.0v1h-5.0zM1237.1 263.9h2.3v1h-2.3zM1242.9 266.7h5.4v1h-5.4zM1240.6 268.0h1.6v1h-1.6zM1241.5 269.2h6.5v1h-6.5zM1238.4 271.3h6.0v1h-6.0zM1253.0 271.3h4.7v1h-4.7zM1237.3 272.6h2.9v1h-2.9zM1252.4 272.6h3.4v1h-3.4zM1256.4 272.6h1.7v1h-1.7zM1240.5 273.8h6.2v1h-6.2zM1241.9 275.1h5.8v1h-5.8zM1243.6 276.0h1.9v1h-1.9zM1233.4 287.9h1.7v1h-1.7zM1226.5 289.2h3.9v1h-3.9zM1232.7 291.2h6.4v1h-6.4zM1246.6 291.2h2.8v1h-2.8zM1234.4 292.5h1.7v1h-1.7zM1235.0 294.5h2.4v1h-2.4zM1243.8 294.5h3.9v1h-3.9zM1238.2 295.8h3.8v1h-3.8zM1235.5 297.0h5.1v1h-5.1zM1241.5 298.3h1.6v1h-1.6zM1236.3 299.8h0.2v1h-0.2zM1237.7 303.2h6.0v1h-6.0zM1239.2 305.8h5.3v1h-5.3zM1265.0 305.8h0.6v1h-0.6zM1241.0 307.1h4.7v1h-4.7zM1255.7 307.1h1.7v1h-1.7zM1233.6 314.4h2.3v1h-2.3zM1231.0 316.4h4.9v1h-4.9zM1240.0 316.4h4.7v1h-4.7zM1261.8 316.4h6.9v1h-6.9zM1234.5 317.6h2.0v1h-2.0zM1244.4 317.6h4.6v1h-4.6zM1255.6 317.6h3.7v1h-3.7zM1233.7 318.9h3.1v1h-3.1zM1238.8 321.0h6.7v1h-6.7zM1262.7 321.0h0.3v1h-0.3zM1238.9 322.3h3.2v1h-3.2zM1256.6 322.3h2.5v1h-2.5zM1239.8 323.7h3.1v1h-3.1zM1262.8 323.7h6.4v1h-6.4zM1238.5 324.9h3.0v1h-3.0zM1256.8 324.9h3.6v1h-3.6zM1240.7 327.7h6.5v1h-6.5zM1268.1 327.7h1.9v1h-1.9zM1242.2 328.9h3.9v1h-3.9zM1241.9 331.6h5.2v1h-5.2zM1269.1 331.6h0.9v1h-0.9zM1243.1 332.9h6.1v1h-6.1zM1239.9 334.1h1.8v1h-1.8zM1234.4 340.2h5.1v1h-5.1zM1267.1 340.2h1.8v1h-1.8zM1237.8 341.5h4.8v1h-4.8zM1250.1 341.5h2.0v1h-2.0zM1262.2 341.5h2.3v1h-2.3zM1240.0 343.5h3.6v1h-3.6zM1238.5 344.8h3.9v1h-3.9zM1244.3 348.2h4.9v1h-4.9zM1240.7 349.4h4.6v1h-4.6zM1242.8 350.7h4.4v1h-4.4zM1245.6 351.9h4.9v1h-4.9zM1239.8 354.1h3.5v1h-3.5zM1244.5 355.4h0.3v1h-0.3zM1243.5 358.1h5.9v1h-5.9zM1260.5 358.1h5.5v1h-5.5zM1237.3 359.4h2.9v1h-2.9zM1254.4 359.4h2.1v1h-2.1zM1243.2 360.6h4.5v1h-4.5zM1259.4 360.6h2.0v1h-2.0zM1245.6 361.9h5.3v1h-5.3zM1237.8 364.1h2.7v1h-2.7zM1242.4 365.3h1.4v1h-1.4zM1242.2 366.6h1.5v1h-1.5zM1242.2 368.7h6.5v1h-6.5zM1257.3 368.7h5.0v1h-5.0zM1242.8 370.0h3.4v1h-3.4zM1241.5 371.2h6.4v1h-6.4zM1226.8 380.6h4.7v1h-4.7zM1232.3 380.0h3.0v1h-3.0zM1231.0 381.2h2.6v1h-2.6zM1237.1 383.5h2.5v1h-2.5zM1232.6 384.8h2.4v1h-2.4zM1238.5 384.8h4.4v1h-4.4zM1241.5 387.0h4.4v1h-4.4zM1249.8 387.0h4.6v1h-4.6zM1259.5 387.0h5.7v1h-5.7zM1265.7 387.0h3.1v1h-3.1zM1240.9 388.3h5.6v1h-5.6zM1237.6 389.5h2.1v1h-2.1zM1261.1 389.5h1.7v1h-1.7zM1241.2 390.8h2.7v1h-2.7zM1238.4 395.4h6.4v1h-6.4zM1259.9 395.4h5.3v1h-5.3zM1265.7 395.4h4.3v1h-4.3zM1241.6 396.7h5.3v1h-5.3zM1252.9 396.7h4.8v1h-4.8zM1236.9 398.2h4.7v1h-4.7zM1255.7 398.2h6.3v1h-6.3zM1239.6 399.5h4.4v1h-4.4zM1233.8 401.7h3.7v1h-3.7zM1240.6 403.0h7.0v1h-7.0zM1253.8 403.0h5.2v1h-5.2zM1239.9 405.9h4.0v1h-4.0zM1242.7 407.2h6.2v1h-6.2zM1235.2 408.7h2.3v1h-2.3zM1261.4 408.7h4.0v1h-4.0zM1239.5 410.0h1.5v1h-1.5zM1258.2 410.0h4.6v1h-4.6zM1229.1 418.5h2.0v1h-2.0zM1239.5 421.3h5.1v1h-5.1zM1268.4 421.3h1.6v1h-1.6zM1232.5 422.6h6.6v1h-6.6zM1246.4 422.6h2.5v1h-2.5zM1239.3 426.2h2.1v1h-2.1zM1235.2 427.5h4.8v1h-4.8zM1237.7 429.0h7.0v1h-7.0zM1259.6 429.0h2.3v1h-2.3zM1242.5 430.3h5.2v1h-5.2zM1234.9 431.5h4.5v1h-4.5zM1235.6 435.3h4.4v1h-4.4zM1233.4 436.6h5.9v1h-5.9zM1236.6 438.8h6.2v1h-6.2zM1239.9 440.1h5.4v1h-5.4zM1234.4 444.4h5.4v1h-5.4zM1230.1 445.7h2.7v1h-2.7zM1240.9 447.9h7.0v1h-7.0zM1239.1 449.2h2.6v1h-2.6zM1229.5 454.2h3.8v1h-3.8zM1241.7 454.2h2.4v1h-2.4zM1247.9 454.2h2.3v1h-2.3zM1250.8 454.2h6.3v1h-6.3zM1231.0 455.5h6.7v1h-6.7zM1250.6 455.5h1.7v1h-1.7zM1228.6 459.1h2.0v1h-2.0zM1225.5 460.4h2.0v1h-2.0zM1226.7 461.9h6.0v1h-6.0zM1229.5 463.2h7.0v1h-7.0zM1248.1 463.2h1.4v1h-1.4zM1236.7 465.4h5.2v1h-5.2zM1235.7 466.7h2.8v1h-2.8zM1246.5 466.7h4.7v1h-4.7zM1239.5 468.2h5.9v1h-5.9zM1236.3 469.5h3.7v1h-3.7zM1239.5 470.7h3.7v1h-3.7zM1233.7 473.1h3.9v1h-3.9zM1244.0 473.1h2.4v1h-2.4zM1238.0 474.4h3.1v1h-3.1z"/><path fill="#8a6550" d="M1236.3 71.7h4.7v1h-4.7zM1242.6 71.7h1.8v1h-1.8zM1245.0 71.7h4.6v1h-4.6zM1233.1 73.0h5.9v1h-5.9zM1239.6 73.0h2.0v1h-2.0zM1256.0 73.0h4.3v1h-4.3zM1231.3 74.2h1.9v1h-1.9zM1240.9 74.2h1.8v1h-1.8zM1255.5 74.2h1.8v1h-1.8zM1236.0 75.5h5.3v1h-5.3zM1242.9 75.5h6.8v1h-6.8zM1250.2 75.5h2.5v1h-2.5zM1237.4 76.7h3.7v1h-3.7zM1245.4 76.7h2.5v1h-2.5zM1249.6 76.7h2.4v1h-2.4zM1255.2 76.7h4.5v1h-4.5zM1235.3 78.0h2.2v1h-2.2zM1252.6 78.0h2.1v1h-2.1zM1255.7 78.0h4.1v1h-4.1zM1236.4 79.2h3.5v1h-3.5zM1234.0 80.5h5.3v1h-5.3zM1240.4 80.5h4.0v1h-4.0zM1248.0 80.5h4.1v1h-4.1zM1257.3 80.5h2.3v1h-2.3zM1233.3 81.7h2.0v1h-2.0zM1241.6 81.7h2.4v1h-2.4zM1254.1 81.7h5.1v1h-5.1zM1259.7 81.7h4.5v1h-4.5zM1240.7 87.9h4.4v1h-4.4zM1245.6 87.9h4.1v1h-4.1zM1239.9 89.9h5.8v1h-5.8zM1240.4 91.1h4.3v1h-4.3zM1245.3 91.1h5.3v1h-5.3zM1251.2 91.1h6.1v1h-6.1zM1239.7 92.4h6.7v1h-6.7zM1247.5 92.4h2.3v1h-2.3zM1255.9 92.4h6.4v1h-6.4zM1237.7 93.6h3.9v1h-3.9zM1251.8 93.6h6.9v1h-6.9zM1235.5 94.9h3.7v1h-3.7zM1247.4 94.9h1.8v1h-1.8zM1250.9 94.9h5.6v1h-5.6zM1232.6 96.1h7.0v1h-7.0zM1241.3 96.1h6.6v1h-6.6zM1248.5 96.1h1.7v1h-1.7zM1250.7 96.1h6.8v1h-6.8zM1258.1 96.1h2.5v1h-2.5zM1261.7 96.1h3.4v1h-3.4zM1235.8 100.5h6.6v1h-6.6zM1255.5 100.5h3.6v1h-3.6zM1243.5 102.4h1.0v1h-1.0zM1239.8 104.9h1.0v1h-1.0zM1236.3 106.2h2.9v1h-2.9zM1236.6 115.6h1.4v1h-1.4zM1241.2 117.7h5.6v1h-5.6zM1258.2 117.7h2.8v1h-2.8zM1237.6 118.9h4.9v1h-4.9zM1249.9 118.9h5.2v1h-5.2zM1243.8 121.0h7.0v1h-7.0zM1252.5 121.0h2.7v1h-2.7zM1255.7 121.0h4.7v1h-4.7zM1261.5 121.0h6.7v1h-6.7zM1269.3 121.0h0.7v1h-0.7zM1242.1 122.2h3.2v1h-3.2zM1250.7 122.2h2.2v1h-2.2zM1253.4 122.2h3.3v1h-3.3zM1258.4 122.2h2.2v1h-2.2zM1261.1 122.2h6.5v1h-6.5zM1245.6 124.3h5.0v1h-5.0zM1251.1 124.3h2.9v1h-2.9zM1255.7 124.3h4.3v1h-4.3zM1244.0 125.5h4.2v1h-4.2zM1252.3 125.5h3.0v1h-3.0zM1244.6 135.5h2.2v1h-2.2zM1247.4 135.5h2.0v1h-2.0zM1247.7 136.8h6.6v1h-6.6zM1256.0 136.8h0.1v1h-0.1zM1244.4 138.0h1.5v1h-1.5zM1250.3 138.0h2.5v1h-2.5zM1242.9 140.2h1.6v1h-1.6zM1245.5 140.2h7.0v1h-7.0zM1253.6 140.2h5.0v1h-5.0zM1243.3 141.4h1.9v1h-1.9zM1245.8 141.4h5.2v1h-5.2zM1251.6 141.4h4.2v1h-4.2zM1261.5 141.4h1.0v1h-1.0zM1239.1 142.7h2.1v1h-2.1zM1242.9 142.7h4.9v1h-4.9zM1242.1 143.9h5.5v1h-5.5zM1248.2 143.9h6.6v1h-6.6zM1225.2 154.8h2.7v1h-2.7zM1228.5 154.8h3.1v1h-3.1zM1258.6 154.8h4.1v1h-4.1zM1264.4 154.8h4.4v1h-4.4zM1237.6 161.4h5.6v1h-5.6zM1249.2 161.4h4.5v1h-4.5zM1269.0 161.4h1.0v1h-1.0zM1240.6 162.6h3.6v1h-3.6zM1245.2 162.6h2.6v1h-2.6zM1248.4 162.6h2.8v1h-2.8zM1239.4 163.9h1.7v1h-1.7zM1250.9 163.9h6.6v1h-6.6zM1258.1 163.9h4.0v1h-4.0zM1232.5 165.1h6.0v1h-6.0zM1239.6 165.1h3.7v1h-3.7zM1242.1 168.0h5.2v1h-5.2zM1248.9 168.0h6.7v1h-6.7zM1238.4 169.2h3.7v1h-3.7zM1243.2 169.2h4.0v1h-4.0zM1237.9 170.5h6.6v1h-6.6zM1245.0 170.5h3.6v1h-3.6zM1241.6 171.8h4.9v1h-4.9zM1242.1 173.0h2.3v1h-2.3zM1247.3 173.0h1.1v1h-1.1zM1247.2 172.0h2.0v1h-2.0zM1250.9 172.0h2.7v1h-2.7zM1254.2 172.0h4.4v1h-4.4zM1263.1 172.0h3.1v1h-3.1zM1237.6 173.2h2.4v1h-2.4zM1254.0 173.2h2.4v1h-2.4zM1243.6 174.5h5.0v1h-5.0zM1238.7 175.8h2.9v1h-2.9zM1243.0 179.9h3.7v1h-3.7zM1239.5 181.2h3.7v1h-3.7zM1246.7 181.2h4.7v1h-4.7zM1247.6 182.6h3.2v1h-3.2zM1245.0 183.8h5.3v1h-5.3zM1251.4 183.8h3.1v1h-3.1zM1262.0 183.8h2.9v1h-2.9zM1265.5 183.8h0.2v1h-0.2zM1231.0 185.2h2.7v1h-2.7zM1244.9 185.2h4.4v1h-4.4zM1265.2 186.5h3.1v1h-3.1zM1242.7 191.2h4.7v1h-4.7zM1246.4 192.5h3.4v1h-3.4zM1247.8 193.9h4.2v1h-4.2zM1252.5 193.9h5.0v1h-5.0zM1267.2 193.9h2.6v1h-2.6zM1247.1 195.1h3.4v1h-3.4zM1260.6 195.1h2.9v1h-2.9zM1261.7 196.5h4.2v1h-4.2zM1235.0 197.8h4.6v1h-4.6zM1252.8 197.8h4.1v1h-4.1zM1262.0 197.8h3.9v1h-3.9zM1234.5 205.1h4.9v1h-4.9zM1241.2 205.1h0.6v1h-0.6zM1233.2 207.1h4.4v1h-4.4zM1250.9 207.1h5.0v1h-5.0zM1261.3 207.1h6.9v1h-6.9zM1238.3 208.3h4.7v1h-4.7zM1255.5 208.3h2.7v1h-2.7zM1240.1 209.6h4.1v1h-4.1zM1245.3 209.6h5.7v1h-5.7zM1252.6 209.6h3.5v1h-3.5zM1257.2 209.6h4.9v1h-4.9zM1239.8 211.7h3.9v1h-3.9zM1244.2 211.7h5.1v1h-5.1zM1241.3 213.0h5.1v1h-5.1zM1247.0 213.0h2.4v1h-2.4zM1243.8 215.0h2.6v1h-2.6zM1248.1 215.0h5.9v1h-5.9zM1260.8 215.0h2.6v1h-2.6zM1246.5 216.3h5.4v1h-5.4zM1257.2 216.3h1.3v1h-1.3zM1250.4 217.5h2.5v1h-2.5zM1259.5 217.5h4.3v1h-4.3zM1247.7 220.3h2.0v1h-2.0zM1254.8 220.3h2.9v1h-2.9zM1247.0 221.6h6.3v1h-6.3zM1243.2 222.8h5.8v1h-5.8zM1247.5 225.6h4.8v1h-4.8zM1269.1 225.6h0.9v1h-0.9zM1250.4 226.9h6.2v1h-6.2zM1257.2 226.9h3.8v1h-3.8zM1247.0 228.1h4.1v1h-4.1zM1259.1 228.1h2.7v1h-2.7zM1245.6 229.4h5.8v1h-5.8zM1237.3 236.2h3.6v1h-3.6zM1242.0 236.2h5.5v1h-5.5zM1249.2 236.2h1.8v1h-1.8zM1244.3 238.9h5.0v1h-5.0zM1248.6 240.1h5.9v1h-5.9zM1255.7 240.1h5.3v1h-5.3zM1262.1 240.1h3.0v1h-3.0zM1265.6 240.1h3.0v1h-3.0zM1248.3 241.4h5.9v1h-5.9zM1254.7 241.4h5.8v1h-5.8zM1268.2 241.4h1.8v1h-1.8zM1245.1 244.2h6.4v1h-6.4zM1257.3 244.2h2.5v1h-2.5zM1242.9 245.4h3.6v1h-3.6zM1258.0 245.4h0.3v1h-0.3zM1249.3 248.2h2.9v1h-2.9zM1252.7 248.2h3.4v1h-3.4zM1247.9 249.4h2.5v1h-2.5zM1251.0 249.4h3.5v1h-3.5zM1255.1 249.4h2.4v1h-2.4zM1246.3 250.7h6.7v1h-6.7zM1259.4 250.7h4.1v1h-4.1zM1264.6 250.7h2.3v1h-2.3zM1247.4 251.9h5.9v1h-5.9zM1253.8 251.9h5.5v1h-5.5zM1249.7 258.8h1.4v1h-1.4zM1243.5 261.4h5.5v1h-5.5zM1255.6 261.4h3.9v1h-3.9zM1260.6 261.4h3.8v1h-3.8zM1267.7 261.4h2.3v1h-2.3zM1245.6 262.7h4.6v1h-4.6zM1251.2 262.7h2.2v1h-2.2zM1254.5 262.7h3.8v1h-3.8zM1240.0 263.9h3.9v1h-3.9zM1248.8 266.7h4.8v1h-4.8zM1243.8 268.0h6.1v1h-6.1zM1250.5 268.0h1.4v1h-1.4zM1249.7 269.2h2.2v1h-2.2zM1257.0 269.2h1.6v1h-1.6zM1245.5 271.3h5.8v1h-5.8zM1240.7 272.6h1.6v1h-1.6zM1247.3 273.8h5.2v1h-5.2zM1254.2 273.8h4.5v1h-4.5zM1248.7 275.1h3.7v1h-3.7zM1266.6 275.1h0.0v1h-0.0zM1247.2 276.0h2.5v1h-2.5zM1236.2 287.9h5.6v1h-5.6zM1230.9 289.2h3.1v1h-3.1zM1235.1 289.2h3.4v1h-3.4zM1240.8 291.2h4.7v1h-4.7zM1257.2 291.2h1.8v1h-1.8zM1237.2 292.5h2.7v1h-2.7zM1249.0 292.5h6.6v1h-6.6zM1256.1 292.5h1.5v1h-1.5zM1237.9 294.5h4.8v1h-4.8zM1249.5 294.5h6.1v1h-6.1zM1256.1 294.5h4.4v1h-4.4zM1262.2 294.5h3.4v1h-3.4zM1242.5 295.8h1.5v1h-1.5zM1249.4 295.8h3.8v1h-3.8zM1241.1 297.0h5.8v1h-5.8zM1248.6 297.0h3.6v1h-3.6zM1252.8 297.0h4.5v1h-4.5zM1264.2 297.0h2.0v1h-2.0zM1244.3 298.3h4.6v1h-4.6zM1261.0 298.3h3.6v1h-3.6zM1265.2 298.3h3.1v1h-3.1zM1244.3 303.2h2.1v1h-2.1zM1260.5 303.2h5.1v1h-5.1zM1245.0 305.8h5.8v1h-5.8zM1247.4 307.1h4.8v1h-4.8zM1236.5 314.4h0.0v1h-0.0zM1236.5 316.4h1.8v1h-1.8zM1246.4 316.4h1.8v1h-1.8zM1248.7 316.4h2.7v1h-2.7zM1256.3 316.4h3.8v1h-3.8zM1237.1 317.6h3.5v1h-3.5zM1241.1 317.6h1.5v1h-1.5zM1237.3 318.9h3.9v1h-3.9zM1242.3 318.9h5.2v1h-5.2zM1248.0 318.9h2.8v1h-2.8zM1259.6 318.9h2.4v1h-2.4zM1246.6 321.0h4.8v1h-4.8zM1253.1 321.0h4.7v1h-4.7zM1243.8 322.3h5.4v1h-5.4zM1249.8 322.3h5.8v1h-5.8zM1259.7 322.3h1.4v1h-1.4zM1244.5 323.7h6.1v1h-6.1zM1252.3 323.7h5.8v1h-5.8zM1259.2 323.7h2.5v1h-2.5zM1242.1 324.9h5.4v1h-5.4zM1252.3 324.9h3.9v1h-3.9zM1261.5 324.9h5.0v1h-5.0zM1247.7 327.7h6.9v1h-6.9zM1255.2 327.7h1.7v1h-1.7zM1257.4 327.7h5.8v1h-5.8zM1246.6 328.9h4.2v1h-4.2zM1254.2 328.9h2.5v1h-2.5zM1257.2 328.9h4.5v1h-4.5zM1262.3 328.9h0.9v1h-0.9zM1247.7 331.6h5.4v1h-5.4zM1258.5 331.6h6.6v1h-6.6zM1266.3 331.6h2.2v1h-2.2zM1249.7 332.9h5.3v1h-5.3zM1255.5 332.9h3.5v1h-3.5zM1259.6 332.9h1.8v1h-1.8zM1262.5 332.9h2.6v1h-2.6zM1243.3 334.1h7.0v1h-7.0zM1252.0 334.1h2.0v1h-2.0zM1240.0 340.2h2.3v1h-2.3zM1245.1 340.2h3.1v1h-3.1zM1248.7 340.2h2.1v1h-2.1zM1251.9 340.2h3.6v1h-3.6zM1256.6 340.2h2.8v1h-2.8zM1260.5 340.2h6.1v1h-6.1zM1243.1 341.5h2.3v1h-2.3zM1253.8 341.5h4.1v1h-4.1zM1244.1 343.5h3.9v1h-3.9zM1250.3 348.2h4.6v1h-4.6zM1263.9 348.2h3.1v1h-3.1zM1247.0 349.4h3.5v1h-3.5zM1256.7 349.4h0.5v1h-0.5zM1248.4 350.7h5.4v1h-5.4zM1254.3 350.7h4.5v1h-4.5zM1251.1 351.9h4.0v1h-4.0zM1256.8 351.9h4.5v1h-4.5zM1243.9 354.1h5.4v1h-5.4zM1250.0 358.1h6.0v1h-6.0zM1240.8 359.4h5.3v1h-5.3zM1258.3 359.4h0.6v1h-0.6zM1248.7 360.6h6.7v1h-6.7zM1256.0 360.6h1.6v1h-1.6zM1252.6 361.9h3.7v1h-3.7zM1241.5 364.1h5.5v1h-5.5zM1249.3 368.7h6.3v1h-6.3zM1263.4 368.7h3.6v1h-3.6zM1248.0 370.0h3.3v1h-3.3zM1249.6 371.2h3.7v1h-3.7zM1255.1 371.2h4.6v1h-4.6zM1260.2 371.2h4.3v1h-4.3zM1232.1 380.6h4.7v1h-4.7zM1236.4 380.0h4.5v1h-4.5zM1241.5 380.0h2.1v1h-2.1zM1234.1 381.2h1.3v1h-1.3zM1240.2 383.5h5.0v1h-5.0zM1245.8 383.5h2.7v1h-2.7zM1235.5 384.8h2.4v1h-2.4zM1247.0 387.0h2.2v1h-2.2zM1255.4 387.0h2.3v1h-2.3zM1247.1 388.3h6.3v1h-6.3zM1253.9 388.3h4.4v1h-4.4zM1240.3 389.5h1.9v1h-1.9zM1243.9 389.5h5.2v1h-5.2zM1263.9 389.5h3.6v1h-3.6zM1244.5 390.8h4.1v1h-4.1zM1249.7 390.8h6.7v1h-6.7zM1257.6 390.8h0.3v1h-0.3zM1245.3 395.4h6.2v1h-6.2zM1254.9 395.4h3.9v1h-3.9zM1247.5 396.7h3.8v1h-3.8zM1242.1 398.2h5.5v1h-5.5zM1248.1 398.2h6.9v1h-6.9zM1245.7 399.5h6.8v1h-6.8zM1253.0 399.5h3.4v1h-3.4zM1257.0 399.5h1.1v1h-1.1zM1238.6 401.7h3.0v1h-3.0zM1254.7 401.7h3.7v1h-3.7zM1260.1 401.7h3.6v1h-3.6zM1248.1 403.0h5.1v1h-5.1zM1244.5 405.9h4.1v1h-4.1zM1266.7 405.9h3.3v1h-3.3zM1250.0 407.2h4.4v1h-4.4zM1256.1 407.2h4.6v1h-4.6zM1239.2 408.7h2.5v1h-2.5zM1242.3 408.7h3.3v1h-3.3zM1247.3 408.7h2.2v1h-2.2zM1250.5 408.7h3.6v1h-3.6zM1241.6 410.0h3.5v1h-3.5zM1251.7 410.0h5.9v1h-5.9zM1263.8 410.0h0.7v1h-0.7zM1232.8 418.5h2.4v1h-2.4zM1245.6 421.3h3.4v1h-3.4zM1250.8 421.3h6.2v1h-6.2zM1265.5 421.3h1.8v1h-1.8zM1240.9 422.6h3.8v1h-3.8zM1250.5 422.6h3.7v1h-3.7zM1254.8 422.6h5.2v1h-5.2zM1242.0 426.2h1.6v1h-1.6zM1245.3 429.0h6.3v1h-6.3zM1252.1 429.0h3.3v1h-3.3zM1248.9 430.3h3.2v1h-3.2zM1240.4 431.5h6.6v1h-6.6zM1248.7 431.5h5.4v1h-5.4zM1255.3 431.5h4.8v1h-4.8zM1241.7 435.3h3.3v1h-3.3zM1243.4 438.8h1.8v1h-1.8zM1254.4 438.8h4.2v1h-4.2zM1259.2 438.8h4.4v1h-4.4zM1264.2 438.8h4.6v1h-4.6zM1246.9 440.1h5.3v1h-5.3zM1252.8 440.1h3.0v1h-3.0zM1240.3 444.4h3.2v1h-3.2zM1244.6 444.4h1.8v1h-1.8zM1233.4 445.7h2.6v1h-2.6zM1248.4 447.9h3.1v1h-3.1zM1254.8 447.9h2.6v1h-2.6zM1242.3 449.2h5.1v1h-5.1zM1247.9 449.2h2.4v1h-2.4zM1252.1 449.2h4.1v1h-4.1zM1257.3 449.2h2.5v1h-2.5zM1233.8 454.2h3.8v1h-3.8zM1238.7 454.2h1.9v1h-1.9zM1238.8 455.5h3.7v1h-3.7zM1243.1 455.5h6.9v1h-6.9zM1231.1 459.1h2.3v1h-2.3zM1228.0 460.4h2.3v1h-2.3zM1233.8 461.9h2.0v1h-2.0zM1237.4 461.9h4.8v1h-4.8zM1247.7 461.9h1.7v1h-1.7zM1249.9 461.9h2.1v1h-2.1zM1238.2 463.2h1.7v1h-1.7zM1243.6 465.4h2.2v1h-2.2zM1240.2 466.7h4.6v1h-4.6zM1245.9 468.2h3.2v1h-3.2zM1258.0 468.2h3.8v1h-3.8zM1240.6 469.5h2.2v1h-2.2zM1243.3 469.5h3.6v1h-3.6zM1248.6 469.5h3.0v1h-3.0zM1252.7 469.5h1.5v1h-1.5zM1243.7 470.7h1.5v1h-1.5zM1245.8 470.7h2.1v1h-2.1zM1249.5 470.7h4.6v1h-4.6zM1238.8 473.1h3.5v1h-3.5z"/><path fill="#707070" d="M1233.7 172.0h2.9v1h-2.9zM1243.2 172.0h3.5v1h-3.5zM1266.8 172.0h2.1v1h-2.1zM1227.2 173.2h4.7v1h-4.7zM1241.1 173.2h4.9v1h-4.9zM1257.0 173.2h3.8v1h-3.8zM1261.9 173.2h3.1v1h-3.1zM1233.9 175.8h4.2v1h-4.2zM1240.5 185.2h3.3v1h-3.3zM1249.8 185.2h3.7v1h-3.7zM1256.7 185.2h3.9v1h-3.9zM1236.0 186.5h2.3v1h-2.3zM1231.0 196.5h4.1v1h-4.1zM1236.2 196.5h2.9v1h-2.9zM1257.5 196.5h3.2v1h-3.2zM1249.1 197.8h2.0v1h-2.0zM1257.4 197.8h4.0v1h-4.0zM1224.2 201.1h3.5v1h-3.5zM1224.6 232.9h3.5v1h-3.5zM1224.6 255.4h3.5v1h-3.5zM1224.6 279.2h3.5v1h-3.5zM1219.3 285.2h3.5v1h-3.5zM1218.6 311.7h3.5v1h-3.5zM1224.6 337.5h3.5v1h-3.5zM1228.1 375.3h3.5v1h-3.5zM1219.3 377.8h3.5v1h-3.5zM1220.9 414.2h3.5v1h-3.5zM1218.4 477.9h3.5v1h-3.5z"/><path fill="#44603c" d="M1224.6 281.6h33.1v1h-33.1zM1226.5 393.3h36.7v1h-36.7zM1218.4 481.5h36.4v1h-36.4zM1218.4 482.8h33.0v1h-33.0z"/></svg>
<div class="abs" style="left:1210px;top:69px;width:1px;height:715px;background:#1a1a1a"></div>
<div class="abs" style="left:1271px;top:69px;width:9px;height:715px;background:#1f1f1f;border-left:1px solid #2a2a2a"></div>
<div class="abs" style="left:1271px;top:94.5px;width:9px;height:1.5px;background:#8a8a8a"></div>

<div id="status"></div>
<svg style="left:7.5px;top:786.5px" width="10" height="11" viewBox="0 0 10 11"><path d="M0.8 4L4.2 7.1L0.8 10.2M8.6 0.6L5.2 3.7L8.6 6.8" stroke="#cccccc" stroke-width="0.95" fill="none"/></svg>
<svg style="left:30.5px;top:786.5px" width="11" height="11" viewBox="0 0 11 11"><circle cx="5.5" cy="5.5" r="4.8" stroke="#cccccc" stroke-width="0.9" fill="none"/><path d="M3.5 3.5L7.5 7.5M7.5 3.5L3.5 7.5" stroke="#cccccc" stroke-width="0.9"/></svg>
<div class="sb" style="left:44px">0</div>
<svg style="left:52px;top:786.5px" width="11" height="10" viewBox="0 0 11 10"><path d="M5.5 0.6L10.4 9.4H0.6Z" stroke="#cccccc" stroke-width="0.9" fill="none" stroke-linejoin="round"/><path d="M5.5 3.5V6.5M5.5 7.3V8.2" stroke="#cccccc" stroke-width="0.9"/></svg>
<div class="sb" style="left:66px">0</div>
<div class="sb" style="left:938.3px;transform:scaleX(0.874);transform-origin:0 0">Ln 18, Col 33</div>
<div class="sb" style="left:1001.3px;transform:scaleX(0.843);transform-origin:0 0">Spaces: 4</div>
<div class="sb" style="left:1050.2px;transform:scaleX(0.85);transform-origin:0 0">UTF-8</div>
<div class="sb" style="left:1086px;transform:scaleX(0.78);transform-origin:0 0">CRLF</div>
<div class="sb" style="left:1134.5px;transform:scaleX(0.86);transform-origin:0 0">HTML</div>
<div class="sb" style="left:1207.8px;transform:scaleX(0.9);transform-origin:0 0">Port : 5500</div>
<div class="sb" style="left:1118.5px">{ }</div>
<svg style="left:1169.5px;top:787px" width="13" height="10" viewBox="0 0 13 10"><path d="M2.2 4.6C1.2 4 1 2.2 1.8 1.3C2.7 0.3 4.6 0.5 5.6 1.6L6.5 2.4L7.4 1.6C8.4 0.5 10.3 0.3 11.2 1.3C12 2.2 11.8 4 10.8 4.6" stroke="#cccccc" stroke-width="1" fill="none"/><path d="M2.2 4.6V7.5C2.2 8.8 4.2 9.6 6.5 9.6C8.8 9.6 10.8 8.8 10.8 7.5V4.6" stroke="#cccccc" stroke-width="1" fill="none"/><path d="M5 6V7.5M8 6V7.5" stroke="#cccccc" stroke-width="1"/></svg>
<svg style="left:1194px;top:786.5px" width="11" height="11" viewBox="0 0 11 11"><circle cx="5.5" cy="5.5" r="4.8" stroke="#cccccc" stroke-width="0.9" fill="none"/><path d="M2.2 8.8L8.8 2.2" stroke="#cccccc" stroke-width="0.9"/></svg>
<svg style="left:1264px;top:786.5px" width="10" height="11" viewBox="0 0 10 11"><path d="M1 8H9L8 6.5V4C8 2.3 6.8 1 5 1C3.2 1 2 2.3 2 4V6.5Z M4 9.3C4.2 9.9 4.5 10.2 5 10.2C5.5 10.2 5.8 9.9 6 9.3" stroke="#cccccc" stroke-width="0.9" fill="none" stroke-linejoin="round"/></svg>
</body></html>
